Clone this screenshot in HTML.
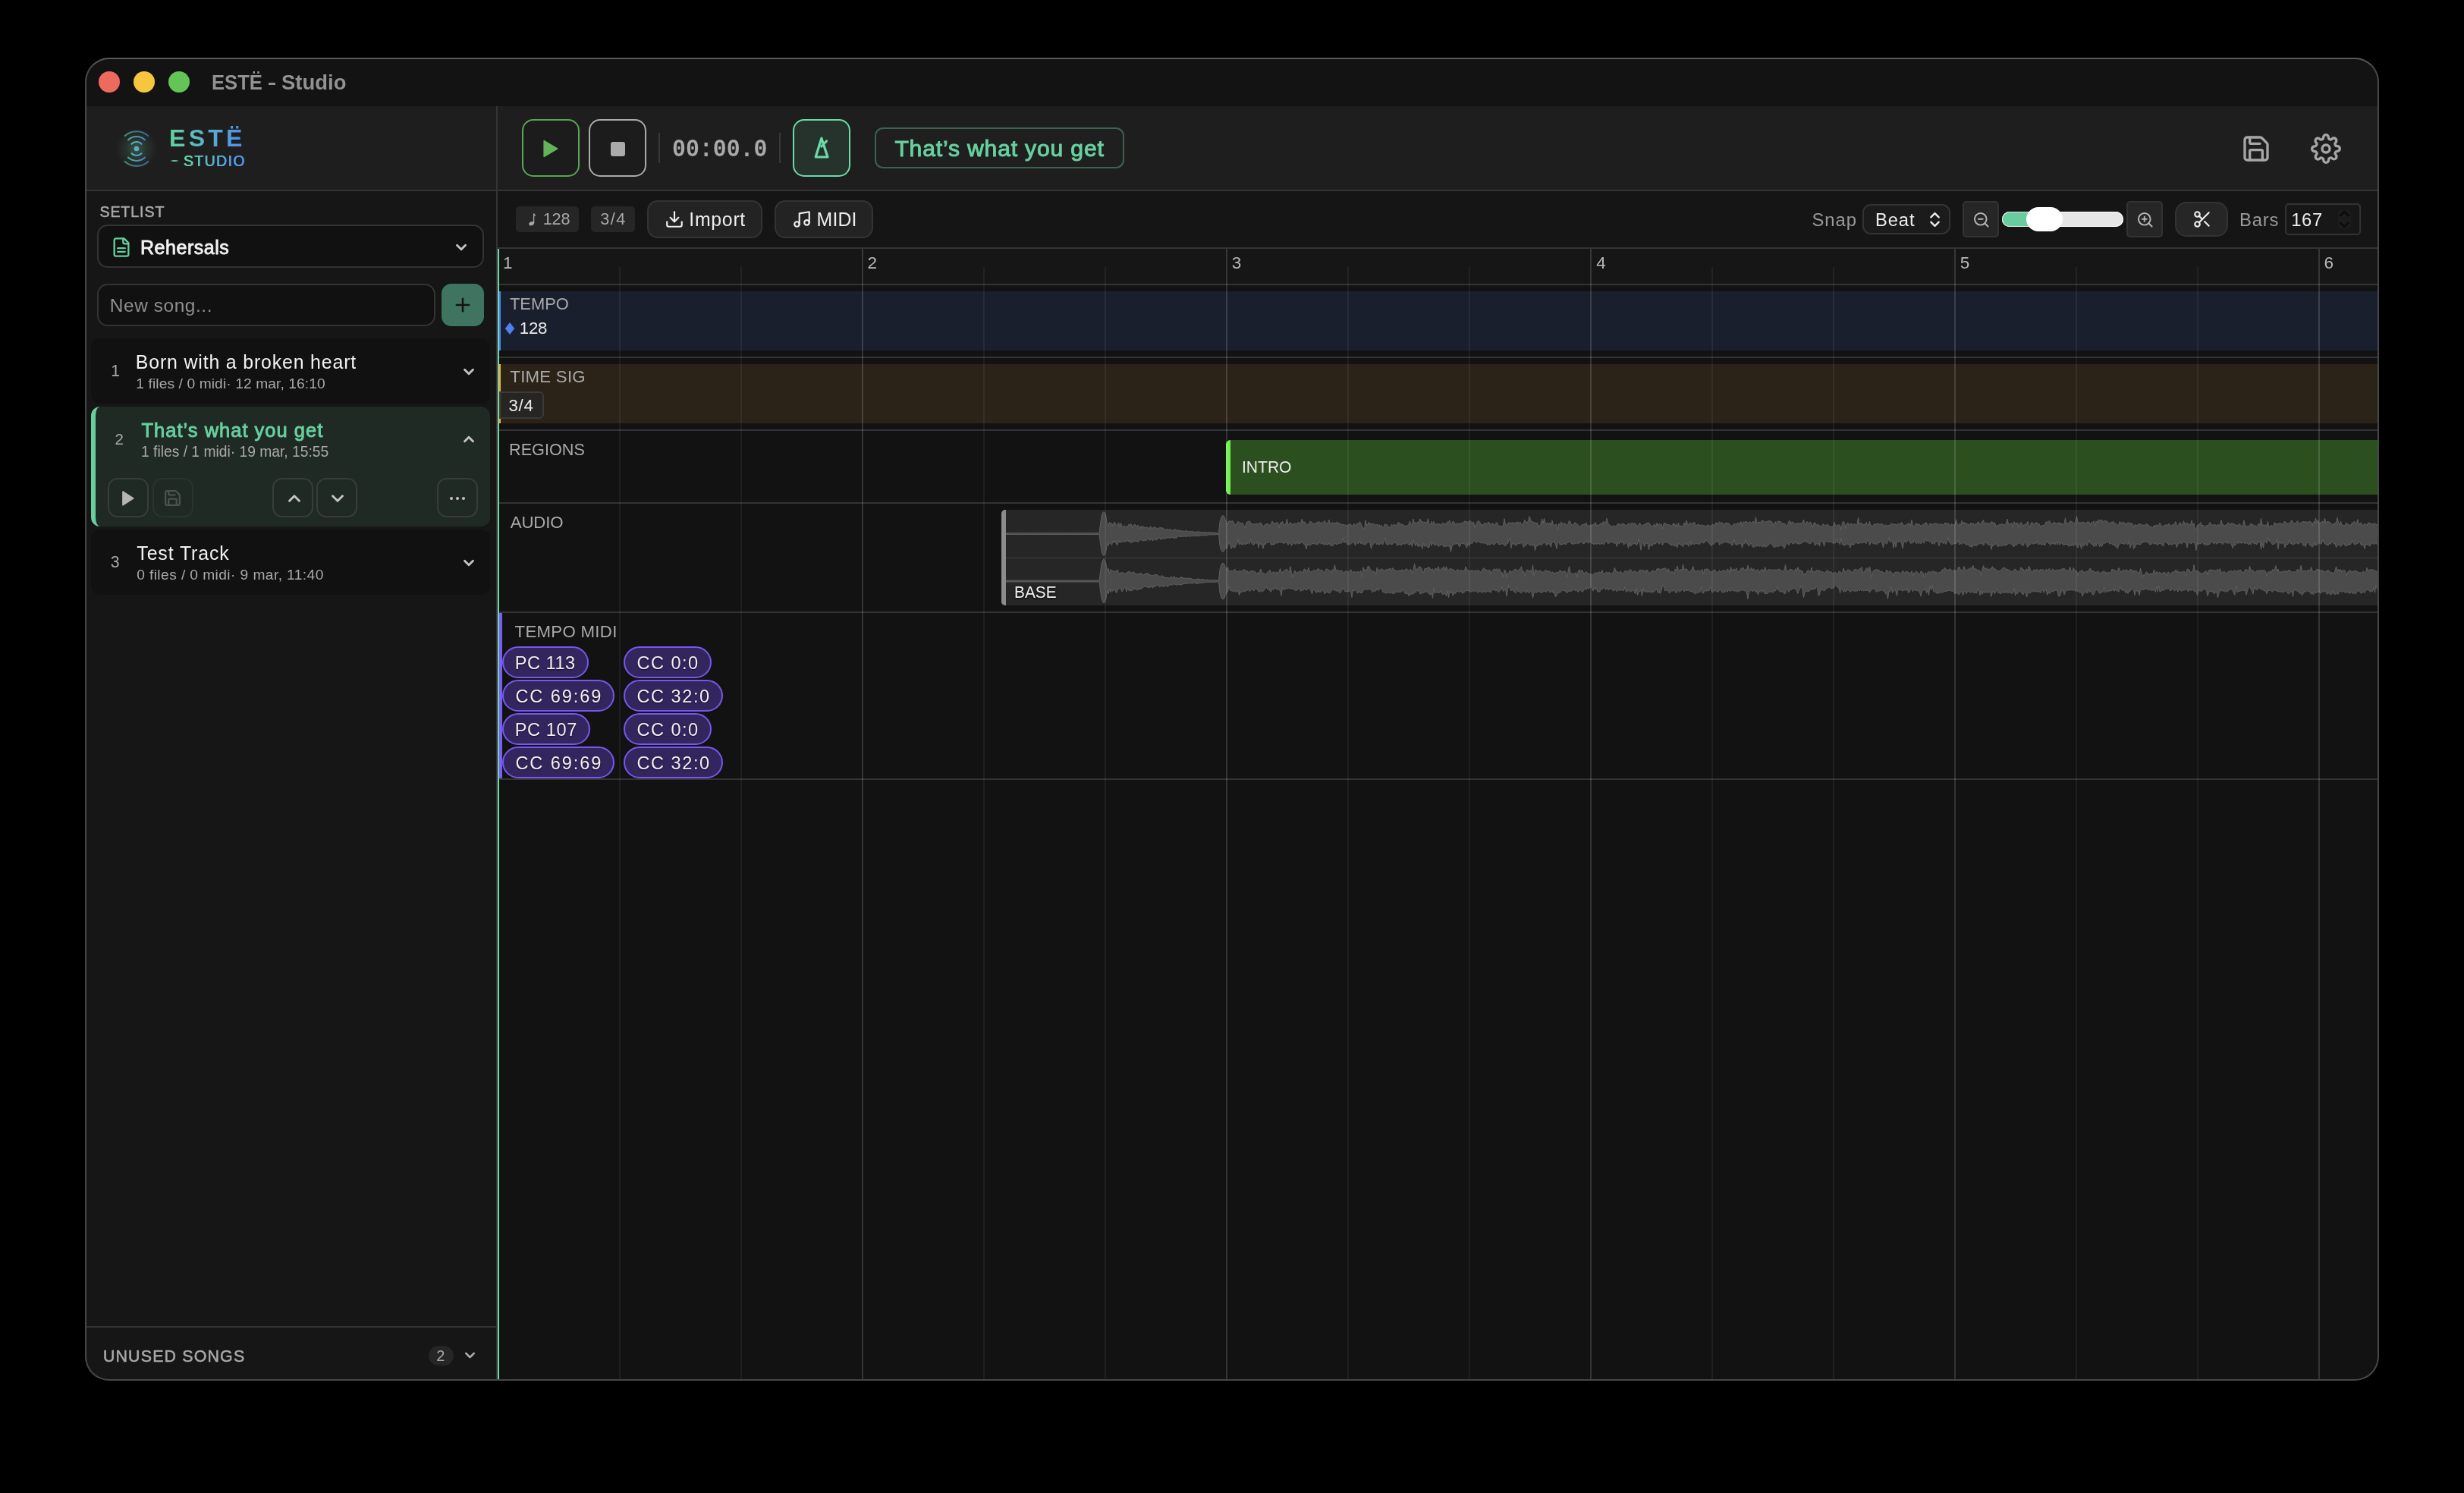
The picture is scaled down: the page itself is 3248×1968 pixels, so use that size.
<!DOCTYPE html>
<html><head><meta charset="utf-8"><title>ESTË - Studio</title>
<style>
html,body{margin:0;padding:0;background:#000;}
body{width:3248px;height:1968px;position:relative;overflow:hidden;font-family:"Liberation Sans",sans-serif;}
.win{position:absolute;left:112px;top:76px;width:3024px;height:1744px;border-radius:32px;overflow:hidden;background:#121212;}
.pg{position:absolute;left:-112px;top:-76px;width:3248px;height:1968px;will-change:transform;}
.b{position:absolute;box-sizing:border-box;display:block;}
.t{position:absolute;white-space:pre;line-height:1;display:block;}
.frame{position:absolute;left:112px;top:76px;width:3024px;height:1744px;border-radius:32px;box-sizing:border-box;border:2px solid #474747;border-top-color:#575757;pointer-events:none;}
</style></head><body>
<div class="win"><div class="pg">
<div class="b" style="left:112px;top:76px;width:3024px;height:64px;background:#131313;"></div>
<div class="b" style="left:112px;top:140px;width:3024px;height:110px;background:#1e1e1e;"></div>
<div class="b" style="left:112px;top:250px;width:3024px;height:2px;background:#343434;"></div>
<div class="b" style="left:112px;top:252px;width:542px;height:1568px;background:#161616;"></div>
<div class="b" style="left:654px;top:140px;width:2px;height:1680px;background:#343434;"></div>
<div class="b" style="left:656px;top:252px;width:2480px;height:74px;background:#151515;"></div>
<div class="b" style="left:656px;top:326px;width:2480px;height:2px;background:#343434;"></div>
<div class="b" style="left:656px;top:328px;width:2480px;height:46px;background:#161616;"></div>
<div class="b" style="left:656px;top:374px;width:2480px;height:2px;background:#343434;"></div>
<div class="b" style="left:130px;top:94px;width:28px;height:28px;border-radius:50%;background:#ee6a5f;"></div>
<div class="b" style="left:176px;top:94px;width:28px;height:28px;border-radius:50%;background:#f5c63e;"></div>
<div class="b" style="left:222px;top:94px;width:28px;height:28px;border-radius:50%;background:#62c555;"></div>
<span class="t" style="left:279.13px;top:95.00px;font-size:27.91px;font-weight:700;color:#929292;font-family:'Liberation Sans', sans-serif;transform-origin:0 0;transform:scaleX(0.9180);">ESTË</span>
<div class="b" style="left:354px;top:108.6px;width:9.4px;height:3.5px;background:#929292;"></div>
<span class="t" style="left:371.01px;top:95.00px;font-size:27.91px;font-weight:700;color:#929292;font-family:'Liberation Sans', sans-serif;transform-origin:0 0;transform:scaleX(0.9845);">Studio</span>
<svg class="b" style="left:140px;top:156px" width="80" height="80" viewBox="-40 -40 80 80" fill="none">
<defs><radialGradient id="glow"><stop offset="0" stop-color="#7fd9a8" stop-opacity=".30"/><stop offset=".5" stop-color="#6fcf9f" stop-opacity=".12"/><stop offset="1" stop-color="#6fcf9f" stop-opacity="0"/></radialGradient>
<linearGradient id="lg" x1="-16" y1="0" x2="16" y2="0" gradientUnits="userSpaceOnUse"><stop offset="0" stop-color="#5fd3a4"/><stop offset="1" stop-color="#4f8df2"/></linearGradient></defs>
<circle r="27" fill="url(#glow)"/>
<g stroke="url(#lg)" stroke-width="2" stroke-linecap="round">
<path d="M-6.5 -6.2 A9 9 0 0 1 6.5 -6.2" opacity=".95"/><path d="M-6.5 6.2 A9 9 0 0 0 6.5 6.2" opacity=".95"/>
<path d="M-11 -11.6 A16 16 0 0 1 11 -11.6" opacity=".8"/><path d="M-11 11.6 A16 16 0 0 0 11 11.6" opacity=".8"/>
<path d="M-15.3 -16.9 A22.8 22.8 0 0 1 15.3 -16.9" opacity=".6"/><path d="M-15.3 16.9 A22.8 22.8 0 0 0 15.3 16.9" opacity=".6"/>
</g><circle r="3.2" fill="url(#lg)"/></svg>
<span class="t" style="left:223.11px;top:166.00px;font-size:32.12px;letter-spacing:4.158px;font-weight:700;color:#5fbfc0;font-family:'Liberation Sans', sans-serif;background:linear-gradient(90deg,#62d3a2,#4f8df2);-webkit-background-clip:text;background-clip:text;-webkit-text-fill-color:transparent;">ESTË</span>
<span class="t" style="left:241.52px;top:203.00px;font-size:19.48px;letter-spacing:1.406px;font-weight:400;color:#5fbfc0;font-family:'Liberation Sans', sans-serif;background:linear-gradient(90deg,#62d3a2,#4f8df2);-webkit-background-clip:text;background-clip:text;-webkit-text-fill-color:transparent;">STUDIO</span>
<span class="t" style="left:241.97px;top:203.00px;font-size:19.48px;letter-spacing:1.406px;font-weight:400;color:#5fbfc0;font-family:'Liberation Sans', sans-serif;background:linear-gradient(90deg,#62d3a2,#4f8df2);-webkit-background-clip:text;background-clip:text;-webkit-text-fill-color:transparent;">STUDIO</span>
<span class="t" style="left:242.42px;top:203.00px;font-size:19.48px;letter-spacing:1.406px;font-weight:400;color:#5fbfc0;font-family:'Liberation Sans', sans-serif;background:linear-gradient(90deg,#62d3a2,#4f8df2);-webkit-background-clip:text;background-clip:text;-webkit-text-fill-color:transparent;">STUDIO</span>
<div class="b" style="left:224.5px;top:211px;width:10px;height:2px;background:linear-gradient(90deg,rgba(98,211,162,.3),#62d3a2,rgba(98,211,162,.4));border-radius:1px;"></div>
<div class="b" style="left:688px;top:157px;width:76px;height:76px;border:2px solid #5aa653;border-radius:15px;background:#1c1c1c;"></div>
<svg class="b" style="left:716px;top:184px" width="20" height="24" viewBox="0 0 20 24"><path d="M1.2 1.6 L18.6 12 L1.2 22.4 Z" fill="#64b25a" stroke="#64b25a" stroke-width="1.6" stroke-linejoin="round"/></svg>
<div class="b" style="left:776px;top:157px;width:76px;height:76px;border:2px solid #ababab;border-radius:15px;background:#1c1c1c;"></div>
<div class="b" style="left:804.5px;top:186.5px;width:19px;height:19px;background:#ababab;border-radius:3px;"></div>
<div class="b" style="left:868px;top:175px;width:2px;height:40px;background:#383838;"></div>
<span class="t" style="left:885.66px;top:182.00px;font-size:32.63px;font-weight:700;color:#a9a9a9;font-family:'Liberation Mono', monospace;transform-origin:0 0;transform:scaleX(0.9150);">00:00.0</span>
<div class="b" style="left:1027px;top:175px;width:2px;height:40px;background:#383838;"></div>
<div class="b" style="left:1045px;top:157px;width:76px;height:76px;border:2px solid #6bdba8;border-radius:15px;background:#26332d;"></div>
<svg class="b" style="left:1066px;top:176px" width="34" height="40" viewBox="0 0 34 40" fill="none" stroke="#6bdba8" stroke-width="3.2" stroke-linejoin="round" stroke-linecap="round"><path d="M16.9 6.2 L9.2 31 L25 31 Z"/><path d="M16.8 17 L23.5 10"/></svg>
<div class="b" style="left:1153px;top:168px;width:329px;height:54px;border:2px solid #3a6350;border-radius:11px;background:#1e1f1e;"></div>
<span class="t" style="left:1179.40px;top:181.00px;font-size:30.09px;letter-spacing:0.842px;font-weight:400;color:#68d09f;font-family:'Liberation Sans', sans-serif;-webkit-text-stroke:1px #68d09f;">That’s what you get</span>
<svg class="b" style="left:2954px;top:176px;" width="40" height="40" viewBox="0 0 24 24" fill="none" stroke="#a6a6a6" stroke-width="2" stroke-linecap="round" stroke-linejoin="round"><path d="M15.2 3a2 2 0 0 1 1.4.6l3.8 3.8a2 2 0 0 1 .6 1.4V19a2 2 0 0 1-2 2H5a2 2 0 0 1-2-2V5a2 2 0 0 1 2-2z"/><path d="M17 21v-7a1 1 0 0 0-1-1H8a1 1 0 0 0-1 1v7"/><path d="M7 3v4a1 1 0 0 0 1 1h7"/></svg>
<svg class="b" style="left:3045.8px;top:176px;" width="40" height="40" viewBox="0 0 24 24" fill="none" stroke="#a6a6a6" stroke-width="2" stroke-linecap="round" stroke-linejoin="round"><circle cx="12" cy="12" r="3"/><path d="M19.4 15a1.65 1.65 0 0 0 .33 1.82l.06.06a2 2 0 0 1 0 2.83 2 2 0 0 1-2.83 0l-.06-.06a1.65 1.65 0 0 0-1.82-.33 1.65 1.65 0 0 0-1 1.51V21a2 2 0 0 1-2 2 2 2 0 0 1-2-2v-.09A1.65 1.65 0 0 0 9 19.4a1.65 1.65 0 0 0-1.82.33l-.06.06a2 2 0 0 1-2.83 0 2 2 0 0 1 0-2.83l.06-.06a1.65 1.65 0 0 0 .33-1.82 1.65 1.65 0 0 0-1.51-1H3a2 2 0 0 1-2-2 2 2 0 0 1 2-2h.09A1.65 1.65 0 0 0 4.6 9a1.65 1.65 0 0 0-.33-1.82l-.06-.06a2 2 0 0 1 0-2.83 2 2 0 0 1 2.83 0l.06.06a1.65 1.65 0 0 0 1.82.33H9a1.65 1.65 0 0 0 1-1.51V3a2 2 0 0 1 2-2 2 2 0 0 1 2 2v.09a1.65 1.65 0 0 0 1 1.51 1.65 1.65 0 0 0 1.82-.33l.06-.06a2 2 0 0 1 2.83 0 2 2 0 0 1 0 2.83l-.06.06a1.65 1.65 0 0 0-.33 1.82V9a1.65 1.65 0 0 0 1.51 1H21a2 2 0 0 1 2 2 2 2 0 0 1-2 2h-.09a1.65 1.65 0 0 0-1.51 1z"/></svg>
<div class="b" style="left:680px;top:272px;width:83px;height:34px;background:#262626;border-radius:5px;"></div>
<svg class="b" style="left:695px;top:279px" width="12" height="20" viewBox="0 0 12 20"><ellipse cx="5.6" cy="15.7" rx="3.4" ry="2.4" transform="rotate(-22 5.6 15.7)" fill="#a8a8a8"/><path d="M8.6 15.2 V2.6 C9.2 4.2 9.9 4.8 10.6 5.4" stroke="#a8a8a8" stroke-width="1.3" fill="none"/></svg>
<span class="t" style="left:715.68px;top:278.00px;font-size:21.66px;letter-spacing:-0.184px;font-weight:400;color:#a8a8a8;font-family:'Liberation Sans', sans-serif;">128</span>
<div class="b" style="left:779px;top:272px;width:58px;height:34px;background:#262626;border-radius:5px;"></div>
<span class="t" style="left:791.14px;top:278.00px;font-size:21.66px;letter-spacing:1.498px;font-weight:400;color:#a8a8a8;font-family:'Liberation Sans', sans-serif;">3/4</span>
<div class="b" style="left:853px;top:264px;width:152px;height:50px;border:2px solid #333;border-radius:14px;background:#232323;"></div>
<svg class="b" style="left:876px;top:276px;" width="26" height="26" viewBox="0 0 24 24" fill="none" stroke="#eee" stroke-width="2" stroke-linecap="round" stroke-linejoin="round"><path d="M21 15v4a2 2 0 0 1-2 2H5a2 2 0 0 1-2-2v-4"/><polyline points="7 10 12 15 17 10"/><line x1="12" x2="12" y1="15" y2="3"/></svg>
<span class="t" style="left:908.36px;top:278.00px;font-size:24.85px;letter-spacing:0.700px;font-weight:400;color:#ededed;font-family:'Liberation Sans', sans-serif;">Import</span>
<div class="b" style="left:1021px;top:264px;width:130px;height:50px;border:2px solid #333;border-radius:14px;background:#232323;"></div>
<svg class="b" style="left:1044.2px;top:276px;" width="26" height="26" viewBox="0 0 24 24" fill="none" stroke="#eee" stroke-width="2" stroke-linecap="round" stroke-linejoin="round"><path d="M9 18V5l12-2v13"/><circle cx="6" cy="18" r="3"/><circle cx="18" cy="16" r="3"/></svg>
<span class="t" style="left:1076.61px;top:278.00px;font-size:24.85px;letter-spacing:0.119px;font-weight:400;color:#ededed;font-family:'Liberation Sans', sans-serif;">MIDI</span>
<span class="t" style="left:2388.53px;top:278.00px;font-size:23.84px;letter-spacing:0.922px;font-weight:400;color:#9a9a9a;font-family:'Liberation Sans', sans-serif;">Snap</span>
<div class="b" style="left:2455px;top:269px;width:116px;height:40px;border:2px solid #333;border-radius:11px;background:#1b1b1b;"></div>
<span class="t" style="left:2471.90px;top:279.00px;font-size:23.69px;letter-spacing:0.970px;font-weight:400;color:#ededed;font-family:'Liberation Sans', sans-serif;">Beat</span>
<svg class="b" style="left:2538px;top:277px;" width="25" height="25" viewBox="0 0 24 24" fill="none" stroke="#eee" stroke-width="2.2" stroke-linecap="round" stroke-linejoin="round"><path d="m7 15 5 5 5-5"/><path d="m7 9 5-5 5 5"/></svg>
<div class="b" style="left:2587px;top:265px;width:48px;height:48px;border:2px solid #333;border-radius:5px;background:#262626;"></div>
<svg class="b" style="left:2600px;top:278.3px;" width="23.5" height="23.5" viewBox="0 0 24 24" fill="none" stroke="#b5b5b5" stroke-width="2" stroke-linecap="round" stroke-linejoin="round"><circle cx="11" cy="11" r="8"/><line x1="21" x2="16.65" y1="21" y2="16.65"/><line x1="8" x2="14" y1="11" y2="11"/></svg>
<div class="b" style="left:2639px;top:279px;width:160px;height:20px;background:#e6e6e6;border-radius:10px;box-shadow:inset 0 0 0 1px #fff;"></div>
<div class="b" style="left:2639px;top:279px;width:60px;height:20px;background:#6acb9f;border-radius:10px 0 0 10px;box-shadow:inset 0 0 0 1px #d8efe5;"></div>
<div class="b" style="left:2671px;top:273px;width:48px;height:32px;background:#fff;border-radius:16px;"></div>
<div class="b" style="left:2803px;top:265px;width:48px;height:48px;border:2px solid #333;border-radius:5px;background:#262626;"></div>
<svg class="b" style="left:2816.3px;top:278.3px;" width="23.5" height="23.5" viewBox="0 0 24 24" fill="none" stroke="#b5b5b5" stroke-width="2" stroke-linecap="round" stroke-linejoin="round"><circle cx="11" cy="11" r="8"/><line x1="21" x2="16.65" y1="21" y2="16.65"/><line x1="8" x2="14" y1="11" y2="11"/><line x1="11" x2="11" y1="8" y2="14"/></svg>
<div class="b" style="left:2867px;top:266px;width:70px;height:46px;border:2px solid #333;border-radius:15px;background:#262626;"></div>
<svg class="b" style="left:2890px;top:275.9px;" width="26" height="26" viewBox="0 0 24 24" fill="none" stroke="#eee" stroke-width="2" stroke-linecap="round" stroke-linejoin="round"><circle cx="6" cy="6" r="3"/><path d="M8.12 8.12 12 12"/><path d="M20 4 8.12 15.88"/><circle cx="6" cy="18" r="3"/><path d="M14.8 14.8 20 20"/></svg>
<span class="t" style="left:2952.09px;top:278.00px;font-size:23.84px;letter-spacing:0.752px;font-weight:400;color:#9a9a9a;font-family:'Liberation Sans', sans-serif;">Bars</span>
<div class="b" style="left:3012px;top:268px;width:100px;height:42px;border:2px solid #333;border-radius:5px;background:#171717;"></div>
<span class="t" style="left:3020.21px;top:278.00px;font-size:23.84px;letter-spacing:0.586px;font-weight:400;color:#ededed;font-family:'Liberation Sans', sans-serif;">167</span>
<svg class="b" style="left:3080px;top:274px" width="22" height="30" viewBox="0 0 22 30" fill="none" stroke="#0b0b0b" stroke-width="2.6" stroke-linecap="round" stroke-linejoin="round"><rect x="2" y="3" width="17" height="24" rx="4" fill="#1c1c1c" stroke="none"/><path d="M5 10.2 L10.3 5 L15.6 10.2"/><path d="M5 19.6 L10.3 24.8 L15.6 19.6"/></svg>
<div class="b" style="left:658px;top:384px;width:2480px;height:78px;background:#1a1f2e;"></div>
<div class="b" style="left:658px;top:384px;width:2px;height:78px;background:#4f80ff;"></div>
<div class="b" style="left:658px;top:470px;width:2480px;height:2px;background:#333;"></div>
<span class="t" style="left:672.36px;top:390.00px;font-size:22.24px;font-weight:400;color:#a9a9a9;font-family:'Liberation Sans', sans-serif;transform-origin:0 0;transform:scaleX(0.9844);">TEMPO</span>
<svg class="b" style="left:665px;top:424px" width="14" height="18" viewBox="0 0 14 18"><path d="M7 0.9 L13.2 9 L7 17.1 L0.8 9 Z" fill="#4f80f0"/></svg>
<span class="t" style="left:684.73px;top:422.00px;font-size:22.24px;letter-spacing:-0.185px;font-weight:400;color:#ececec;font-family:'Liberation Sans', sans-serif;">128</span>
<div class="b" style="left:658px;top:480px;width:2480px;height:78px;background:#2b2318;"></div>
<div class="b" style="left:658px;top:480px;width:2px;height:78px;background:#ffa531;"></div>
<div class="b" style="left:658px;top:566px;width:2480px;height:2px;background:#333;"></div>
<span class="t" style="left:672.36px;top:486.00px;font-size:22.24px;letter-spacing:0.241px;font-weight:400;color:#a9a9a9;font-family:'Liberation Sans', sans-serif;">TIME SIG</span>
<div class="b" style="left:658px;top:516px;width:59px;height:36px;border:2px solid #3a3a3a;border-left:none;border-radius:0 6px 6px 0;background:rgba(38,38,38,.82);"></div>
<span class="t" style="left:670.52px;top:524.00px;font-size:22.24px;letter-spacing:0.661px;font-weight:400;color:#ececec;font-family:'Liberation Sans', sans-serif;">3/4</span>
<div class="b" style="left:658px;top:662px;width:2480px;height:2px;background:#333;"></div>
<span class="t" style="left:671.07px;top:582.00px;font-size:22.24px;font-weight:400;color:#a9a9a9;font-family:'Liberation Sans', sans-serif;transform-origin:0 0;transform:scaleX(0.9735);">REGIONS</span>
<div class="b" style="left:1616px;top:580px;width:1530px;height:72px;background:#2c4f20;border-radius:6px 0 0 6px;"></div>
<div class="b" style="left:1616px;top:580px;width:6px;height:72px;background:#72f04f;border-radius:6px 0 0 6px;"></div>
<span class="t" style="left:1636.51px;top:605.00px;font-size:22.24px;font-weight:400;color:#ececec;font-family:'Liberation Sans', sans-serif;transform-origin:0 0;transform:scaleX(0.9462);">INTRO</span>
<div class="b" style="left:658px;top:806px;width:2480px;height:2px;background:#333;"></div>
<span class="t" style="left:672.80px;top:678.00px;font-size:22.24px;letter-spacing:-0.171px;font-weight:400;color:#a9a9a9;font-family:'Liberation Sans', sans-serif;">AUDIO</span>
<div class="b" style="left:1320px;top:672px;width:1820px;height:126px;background:#262626;border-radius:5px 0 0 5px;"></div>
<div class="b" style="left:1326px;top:733.5px;width:1820px;height:3px;background:#2e2e2e;"></div>
<svg class="b" style="left:0;top:0" width="3248" height="900" viewBox="0 0 3248 900"><g fill="#4b4b4b" stroke="#626262" stroke-width="0.9" stroke-linejoin="round"><path d="M1326.0 702.5 L1327.5 702.5 L1329.0 702.5 L1330.5 702.5 L1332.0 702.5 L1333.5 702.5 L1335.0 702.5 L1336.5 702.5 L1338.0 702.5 L1339.5 702.5 L1341.0 702.5 L1342.5 702.5 L1344.0 702.5 L1345.5 702.5 L1347.0 702.5 L1348.5 702.5 L1350.0 702.5 L1351.5 702.5 L1353.0 702.5 L1354.5 702.5 L1356.0 702.5 L1357.5 702.5 L1359.0 702.5 L1360.5 702.5 L1362.0 702.5 L1363.5 702.5 L1365.0 702.5 L1366.5 702.5 L1368.0 702.5 L1369.5 702.5 L1371.0 702.5 L1372.5 702.5 L1374.0 702.5 L1375.5 702.5 L1377.0 702.5 L1378.5 702.5 L1380.0 702.5 L1381.5 702.5 L1383.0 702.5 L1384.5 702.5 L1386.0 702.5 L1387.5 702.5 L1389.0 702.5 L1390.5 702.5 L1392.0 702.5 L1393.5 702.5 L1395.0 702.5 L1396.5 702.5 L1398.0 702.5 L1399.5 702.5 L1401.0 702.5 L1402.5 702.5 L1404.0 702.5 L1405.5 702.5 L1407.0 702.5 L1408.5 702.5 L1410.0 702.5 L1411.5 702.5 L1413.0 702.5 L1414.5 702.5 L1416.0 702.5 L1417.5 702.5 L1419.0 702.5 L1420.5 702.5 L1422.0 702.5 L1423.5 702.5 L1425.0 702.5 L1426.5 702.5 L1428.0 702.5 L1429.5 702.5 L1431.0 702.5 L1432.5 702.5 L1434.0 702.5 L1435.5 702.5 L1437.0 702.5 L1438.5 702.5 L1440.0 702.5 L1441.5 702.5 L1443.0 702.5 L1444.5 702.5 L1446.0 702.5 L1447.5 702.5 L1449.0 702.5 L1450.5 690.8 L1452.0 680.8 L1453.5 676.0 L1455.0 674.5 L1456.5 676.0 L1458.0 680.8 L1459.5 690.8 L1461.0 692.8 L1462.5 688.3 L1464.0 690.5 L1465.5 689.5 L1467.0 693.6 L1468.5 688.5 L1470.0 689.2 L1471.5 691.6 L1473.0 693.2 L1474.5 688.8 L1476.0 694.8 L1477.5 689.0 L1479.0 693.8 L1480.5 695.1 L1482.0 692.7 L1483.5 694.1 L1485.0 694.3 L1486.5 694.0 L1488.0 690.9 L1489.5 692.2 L1491.0 690.4 L1492.5 695.5 L1494.0 692.3 L1495.5 691.2 L1497.0 692.0 L1498.5 695.0 L1500.0 692.1 L1501.5 694.2 L1503.0 696.8 L1504.5 693.0 L1506.0 696.3 L1507.5 693.8 L1509.0 695.6 L1510.5 695.1 L1512.0 695.2 L1513.5 695.4 L1515.0 697.6 L1516.5 693.6 L1518.0 696.3 L1519.5 696.0 L1521.0 695.0 L1522.5 694.8 L1524.0 696.3 L1525.5 696.2 L1527.0 697.5 L1528.5 695.1 L1530.0 695.9 L1531.5 695.7 L1533.0 696.1 L1534.5 697.1 L1536.0 699.0 L1537.5 697.4 L1539.0 697.7 L1540.5 698.3 L1542.0 697.9 L1543.5 697.8 L1545.0 699.6 L1546.5 699.3 L1548.0 697.5 L1549.5 697.8 L1551.0 699.4 L1552.5 698.4 L1554.0 700.2 L1555.5 698.5 L1557.0 700.2 L1558.5 699.7 L1560.0 700.3 L1561.5 700.3 L1563.0 699.3 L1564.5 700.2 L1566.0 700.9 L1567.5 700.2 L1569.0 700.9 L1570.5 700.3 L1572.0 700.2 L1573.5 701.3 L1575.0 701.2 L1576.5 701.3 L1578.0 700.6 L1579.5 701.4 L1581.0 700.7 L1582.5 701.5 L1584.0 701.4 L1585.5 701.6 L1587.0 702.0 L1588.5 701.1 L1590.0 701.9 L1591.5 701.9 L1593.0 701.6 L1594.5 702.1 L1596.0 701.7 L1597.5 701.8 L1599.0 702.1 L1600.5 702.0 L1602.0 702.2 L1603.5 702.5 L1605.0 702.6 L1606.5 702.5 L1608.0 687.9 L1609.5 682.5 L1611.0 680.0 L1612.5 679.6 L1614.0 681.4 L1615.5 685.7 L1617.0 690.3 L1618.5 689.6 L1620.0 686.7 L1621.5 686.5 L1623.0 688.0 L1624.5 686.0 L1626.0 688.3 L1627.5 691.7 L1629.0 691.6 L1630.5 689.5 L1632.0 687.2 L1633.5 688.9 L1635.0 690.0 L1636.5 689.1 L1638.0 689.3 L1639.5 692.6 L1641.0 695.8 L1642.5 689.5 L1644.0 687.8 L1645.5 687.5 L1647.0 686.7 L1648.5 688.4 L1650.0 690.7 L1651.5 690.7 L1653.0 691.1 L1654.5 690.9 L1656.0 689.7 L1657.5 691.0 L1659.0 689.8 L1660.5 689.2 L1662.0 689.2 L1663.5 690.6 L1665.0 694.5 L1666.5 692.8 L1668.0 690.9 L1669.5 690.7 L1671.0 689.7 L1672.5 692.1 L1674.0 692.0 L1675.5 690.8 L1677.0 686.8 L1678.5 689.4 L1680.0 689.8 L1681.5 689.7 L1683.0 688.7 L1684.5 688.9 L1686.0 695.4 L1687.5 689.2 L1689.0 688.8 L1690.5 687.3 L1692.0 691.4 L1693.5 692.0 L1695.0 690.2 L1696.5 684.1 L1698.0 692.3 L1699.5 690.4 L1701.0 688.5 L1702.5 690.2 L1704.0 692.3 L1705.5 690.3 L1707.0 689.7 L1708.5 691.1 L1710.0 689.9 L1711.5 688.0 L1713.0 689.8 L1714.5 690.7 L1716.0 684.3 L1717.5 687.7 L1719.0 688.1 L1720.5 688.3 L1722.0 691.4 L1723.5 691.1 L1725.0 692.5 L1726.5 687.7 L1728.0 687.6 L1729.5 688.7 L1731.0 690.2 L1732.5 690.3 L1734.0 689.7 L1735.5 688.6 L1737.0 688.8 L1738.5 687.1 L1740.0 689.5 L1741.5 688.3 L1743.0 689.7 L1744.5 688.1 L1746.0 686.3 L1747.5 688.9 L1749.0 690.1 L1750.5 688.7 L1752.0 685.3 L1753.5 691.0 L1755.0 689.6 L1756.5 688.8 L1758.0 689.7 L1759.5 688.9 L1761.0 689.7 L1762.5 687.8 L1764.0 690.2 L1765.5 689.1 L1767.0 691.1 L1768.5 691.3 L1770.0 691.8 L1771.5 690.9 L1773.0 692.6 L1774.5 691.7 L1776.0 693.8 L1777.5 691.5 L1779.0 691.0 L1780.5 690.9 L1782.0 693.9 L1783.5 692.6 L1785.0 690.2 L1786.5 693.7 L1788.0 691.2 L1789.5 689.3 L1791.0 691.0 L1792.5 687.4 L1794.0 690.9 L1795.5 693.6 L1797.0 696.1 L1798.5 698.2 L1800.0 685.5 L1801.5 692.3 L1803.0 691.2 L1804.5 688.1 L1806.0 691.6 L1807.5 689.5 L1809.0 691.7 L1810.5 690.4 L1812.0 690.6 L1813.5 692.8 L1815.0 691.0 L1816.5 693.4 L1818.0 691.3 L1819.5 694.1 L1821.0 692.1 L1822.5 696.0 L1824.0 694.2 L1825.5 690.6 L1827.0 692.1 L1828.5 691.4 L1830.0 694.9 L1831.5 695.0 L1833.0 693.8 L1834.5 691.2 L1836.0 692.7 L1837.5 691.1 L1839.0 691.8 L1840.5 693.0 L1842.0 690.8 L1843.5 688.1 L1845.0 690.9 L1846.5 690.4 L1848.0 692.1 L1849.5 690.9 L1851.0 693.7 L1852.5 693.1 L1854.0 693.2 L1855.5 692.4 L1857.0 691.1 L1858.5 686.9 L1860.0 691.5 L1861.5 692.2 L1863.0 683.9 L1864.5 690.6 L1866.0 688.3 L1867.5 689.9 L1869.0 688.0 L1870.5 687.8 L1872.0 684.0 L1873.5 687.6 L1875.0 687.0 L1876.5 688.9 L1878.0 688.0 L1879.5 688.5 L1881.0 688.8 L1882.5 683.6 L1884.0 691.1 L1885.5 691.6 L1887.0 687.4 L1888.5 690.7 L1890.0 687.3 L1891.5 691.7 L1893.0 691.4 L1894.5 689.8 L1896.0 691.2 L1897.5 690.6 L1899.0 693.4 L1900.5 690.0 L1902.0 689.5 L1903.5 690.6 L1905.0 689.8 L1906.5 691.1 L1908.0 687.7 L1909.5 687.8 L1911.0 685.8 L1912.5 689.9 L1914.0 690.6 L1915.5 686.8 L1917.0 688.6 L1918.5 691.5 L1920.0 689.4 L1921.5 690.8 L1923.0 689.4 L1924.5 691.1 L1926.0 689.0 L1927.5 689.8 L1929.0 688.8 L1930.5 686.8 L1932.0 687.8 L1933.5 687.6 L1935.0 688.5 L1936.5 687.1 L1938.0 686.6 L1939.5 688.0 L1941.0 689.4 L1942.5 688.0 L1944.0 695.8 L1945.5 691.4 L1947.0 688.5 L1948.5 686.3 L1950.0 687.3 L1951.5 689.5 L1953.0 693.8 L1954.5 691.0 L1956.0 691.6 L1957.5 688.8 L1959.0 690.9 L1960.5 689.4 L1962.0 688.3 L1963.5 689.2 L1965.0 691.9 L1966.5 690.7 L1968.0 689.6 L1969.5 692.7 L1971.0 691.5 L1972.5 688.6 L1974.0 690.1 L1975.5 693.6 L1977.0 693.7 L1978.5 692.9 L1980.0 694.4 L1981.5 692.2 L1983.0 683.6 L1984.5 690.9 L1986.0 692.5 L1987.5 689.9 L1989.0 688.7 L1990.5 688.7 L1992.0 690.0 L1993.5 688.3 L1995.0 691.0 L1996.5 688.8 L1998.0 689.2 L1999.5 688.6 L2001.0 687.8 L2002.5 689.4 L2004.0 688.1 L2005.5 691.7 L2007.0 692.1 L2008.5 688.4 L2010.0 685.2 L2011.5 688.4 L2013.0 689.0 L2014.5 686.7 L2016.0 680.5 L2017.5 684.7 L2019.0 687.7 L2020.5 687.6 L2022.0 688.9 L2023.5 688.7 L2025.0 690.1 L2026.5 688.9 L2028.0 695.3 L2029.5 692.5 L2031.0 691.1 L2032.5 683.9 L2034.0 690.2 L2035.5 683.3 L2037.0 689.5 L2038.5 690.5 L2040.0 688.6 L2041.5 690.8 L2043.0 689.1 L2044.5 692.2 L2046.0 686.0 L2047.5 691.1 L2049.0 692.4 L2050.5 691.4 L2052.0 690.9 L2053.5 698.5 L2055.0 689.9 L2056.5 692.9 L2058.0 687.7 L2059.5 691.4 L2061.0 689.4 L2062.5 689.7 L2064.0 690.7 L2065.5 693.0 L2067.0 690.4 L2068.5 686.0 L2070.0 688.6 L2071.5 692.0 L2073.0 692.4 L2074.5 690.7 L2076.0 688.5 L2077.5 691.2 L2079.0 690.1 L2080.5 692.4 L2082.0 694.1 L2083.5 693.2 L2085.0 691.6 L2086.5 691.7 L2088.0 690.6 L2089.5 691.6 L2091.0 688.9 L2092.5 693.5 L2094.0 692.3 L2095.5 694.1 L2097.0 691.5 L2098.5 693.8 L2100.0 690.9 L2101.5 692.0 L2103.0 688.5 L2104.5 693.0 L2106.0 691.8 L2107.5 692.8 L2109.0 690.5 L2110.5 689.4 L2112.0 691.9 L2113.5 686.9 L2115.0 689.8 L2116.5 689.1 L2118.0 683.1 L2119.5 689.3 L2121.0 691.1 L2122.5 692.6 L2124.0 693.4 L2125.5 694.7 L2127.0 692.3 L2128.5 694.2 L2130.0 693.4 L2131.5 691.6 L2133.0 690.1 L2134.5 691.1 L2136.0 690.7 L2137.5 692.2 L2139.0 689.5 L2140.5 691.1 L2142.0 691.7 L2143.5 692.9 L2145.0 692.3 L2146.5 689.9 L2148.0 690.2 L2149.5 691.5 L2151.0 689.0 L2152.5 690.4 L2154.0 689.6 L2155.5 689.9 L2157.0 691.5 L2158.5 694.5 L2160.0 691.1 L2161.5 689.6 L2163.0 691.8 L2164.5 693.1 L2166.0 692.0 L2167.5 691.4 L2169.0 691.6 L2170.5 689.0 L2172.0 690.0 L2173.5 688.9 L2175.0 690.9 L2176.5 692.9 L2178.0 694.1 L2179.5 692.6 L2181.0 690.5 L2182.5 695.0 L2184.0 689.3 L2185.5 692.2 L2187.0 690.2 L2188.5 691.6 L2190.0 690.8 L2191.5 696.8 L2193.0 690.5 L2194.5 688.8 L2196.0 691.6 L2197.5 691.0 L2199.0 691.8 L2200.5 691.5 L2202.0 693.2 L2203.5 692.6 L2205.0 691.1 L2206.5 689.0 L2208.0 693.7 L2209.5 690.5 L2211.0 694.6 L2212.5 689.0 L2214.0 695.0 L2215.5 692.7 L2217.0 694.1 L2218.5 693.0 L2220.0 689.2 L2221.5 691.8 L2223.0 686.1 L2224.5 690.6 L2226.0 692.2 L2227.5 688.5 L2229.0 690.7 L2230.5 689.7 L2232.0 689.4 L2233.5 688.2 L2235.0 692.1 L2236.5 693.1 L2238.0 691.1 L2239.5 691.5 L2241.0 692.7 L2242.5 692.2 L2244.0 692.0 L2245.5 692.6 L2247.0 693.2 L2248.5 693.5 L2250.0 692.7 L2251.5 692.1 L2253.0 692.9 L2254.5 693.2 L2256.0 692.7 L2257.5 690.9 L2259.0 691.5 L2260.5 693.0 L2262.0 688.5 L2263.5 690.8 L2265.0 689.1 L2266.5 687.8 L2268.0 689.6 L2269.5 688.9 L2271.0 689.2 L2272.5 693.9 L2274.0 689.7 L2275.5 689.0 L2277.0 689.8 L2278.5 689.5 L2280.0 691.4 L2281.5 692.7 L2283.0 693.6 L2284.5 692.0 L2286.0 690.3 L2287.5 690.6 L2289.0 691.7 L2290.5 688.9 L2292.0 690.1 L2293.5 689.5 L2295.0 687.4 L2296.5 693.6 L2298.0 687.9 L2299.5 688.5 L2301.0 687.2 L2302.5 687.7 L2304.0 689.7 L2305.5 688.5 L2307.0 687.6 L2308.5 689.7 L2310.0 688.1 L2311.5 687.3 L2313.0 689.7 L2314.5 681.6 L2316.0 689.5 L2317.5 688.0 L2319.0 688.5 L2320.5 688.2 L2322.0 686.9 L2323.5 685.3 L2325.0 687.5 L2326.5 688.4 L2328.0 687.4 L2329.5 687.8 L2331.0 686.2 L2332.5 686.6 L2334.0 687.3 L2335.5 687.3 L2337.0 692.7 L2338.5 689.8 L2340.0 687.6 L2341.5 690.2 L2343.0 687.1 L2344.5 687.2 L2346.0 687.3 L2347.5 687.8 L2349.0 689.7 L2350.5 690.1 L2352.0 689.7 L2353.5 691.2 L2355.0 693.8 L2356.5 691.4 L2358.0 687.1 L2359.5 686.6 L2361.0 690.4 L2362.5 687.6 L2364.0 689.2 L2365.5 690.0 L2367.0 690.3 L2368.5 689.7 L2370.0 689.9 L2371.5 689.7 L2373.0 690.1 L2374.5 689.7 L2376.0 687.7 L2377.5 685.2 L2379.0 690.0 L2380.5 691.8 L2382.0 687.3 L2383.5 689.4 L2385.0 689.4 L2386.5 688.1 L2388.0 690.4 L2389.5 695.1 L2391.0 689.4 L2392.5 688.5 L2394.0 692.4 L2395.5 691.2 L2397.0 691.8 L2398.5 692.7 L2400.0 693.9 L2401.5 693.4 L2403.0 690.5 L2404.5 691.5 L2406.0 692.9 L2407.5 692.1 L2409.0 691.0 L2410.5 693.1 L2412.0 693.5 L2413.5 694.4 L2415.0 694.1 L2416.5 694.7 L2418.0 688.2 L2419.5 692.7 L2421.0 693.3 L2422.5 691.7 L2424.0 691.8 L2425.5 692.4 L2427.0 698.5 L2428.5 689.8 L2430.0 687.0 L2431.5 689.6 L2433.0 696.6 L2434.5 690.0 L2436.0 688.9 L2437.5 692.8 L2439.0 690.5 L2440.5 689.8 L2442.0 691.9 L2443.5 691.4 L2445.0 690.2 L2446.5 692.7 L2448.0 691.3 L2449.5 681.9 L2451.0 691.3 L2452.5 689.5 L2454.0 689.5 L2455.5 691.3 L2457.0 691.2 L2458.5 692.1 L2460.0 688.3 L2461.5 692.0 L2463.0 692.2 L2464.5 687.3 L2466.0 692.5 L2467.5 693.0 L2469.0 693.9 L2470.5 690.4 L2472.0 691.3 L2473.5 690.9 L2475.0 690.1 L2476.5 690.3 L2478.0 691.5 L2479.5 690.5 L2481.0 690.3 L2482.5 692.2 L2484.0 694.3 L2485.5 691.5 L2487.0 693.7 L2488.5 692.2 L2490.0 692.9 L2491.5 692.2 L2493.0 689.9 L2494.5 690.7 L2496.0 690.7 L2497.5 690.9 L2499.0 691.5 L2500.5 692.1 L2502.0 690.2 L2503.5 691.7 L2505.0 689.8 L2506.5 688.4 L2508.0 690.3 L2509.5 693.0 L2511.0 692.7 L2512.5 691.7 L2514.0 691.0 L2515.5 689.9 L2517.0 690.0 L2518.5 693.0 L2520.0 685.1 L2521.5 693.9 L2523.0 693.5 L2524.5 692.1 L2526.0 689.6 L2527.5 691.5 L2529.0 690.4 L2530.5 691.5 L2532.0 693.4 L2533.5 692.3 L2535.0 691.6 L2536.5 690.1 L2538.0 689.9 L2539.5 688.7 L2541.0 693.7 L2542.5 693.2 L2544.0 689.8 L2545.5 690.7 L2547.0 691.3 L2548.5 690.5 L2550.0 690.3 L2551.5 689.6 L2553.0 690.0 L2554.5 691.7 L2556.0 690.4 L2557.5 691.8 L2559.0 690.8 L2560.5 691.2 L2562.0 692.6 L2563.5 689.3 L2565.0 689.5 L2566.5 690.2 L2568.0 690.0 L2569.5 690.7 L2571.0 694.4 L2572.5 690.6 L2574.0 691.9 L2575.5 691.8 L2577.0 692.3 L2578.5 684.8 L2580.0 691.0 L2581.5 693.7 L2583.0 690.0 L2584.5 692.2 L2586.0 686.3 L2587.5 690.6 L2589.0 688.3 L2590.5 689.6 L2592.0 690.0 L2593.5 690.5 L2595.0 691.1 L2596.5 692.7 L2598.0 689.0 L2599.5 690.5 L2601.0 689.6 L2602.5 693.2 L2604.0 690.3 L2605.5 691.0 L2607.0 688.1 L2608.5 688.3 L2610.0 692.2 L2611.5 690.1 L2613.0 687.6 L2614.5 685.5 L2616.0 690.7 L2617.5 689.6 L2619.0 688.9 L2620.5 689.9 L2622.0 690.0 L2623.5 690.3 L2625.0 687.6 L2626.5 688.0 L2628.0 690.0 L2629.5 688.7 L2631.0 694.6 L2632.5 692.4 L2634.0 692.3 L2635.5 691.6 L2637.0 691.6 L2638.5 690.3 L2640.0 690.9 L2641.5 691.9 L2643.0 691.6 L2644.5 690.0 L2646.0 684.3 L2647.5 691.1 L2649.0 691.0 L2650.5 690.0 L2652.0 689.3 L2653.5 694.2 L2655.0 687.6 L2656.5 690.7 L2658.0 689.5 L2659.5 689.1 L2661.0 695.2 L2662.5 689.9 L2664.0 688.4 L2665.5 690.6 L2667.0 693.0 L2668.5 691.8 L2670.0 690.8 L2671.5 690.0 L2673.0 687.4 L2674.5 692.5 L2676.0 694.9 L2677.5 689.0 L2679.0 688.5 L2680.5 691.4 L2682.0 689.5 L2683.5 689.4 L2685.0 688.6 L2686.5 690.9 L2688.0 690.2 L2689.5 694.6 L2691.0 693.0 L2692.5 692.4 L2694.0 692.2 L2695.5 692.1 L2697.0 687.8 L2698.5 688.3 L2700.0 687.7 L2701.5 686.2 L2703.0 689.9 L2704.5 689.9 L2706.0 691.0 L2707.5 687.9 L2709.0 689.3 L2710.5 690.0 L2712.0 690.4 L2713.5 688.4 L2715.0 691.6 L2716.5 688.8 L2718.0 691.5 L2719.5 690.2 L2721.0 690.5 L2722.5 682.7 L2724.0 691.1 L2725.5 688.9 L2727.0 690.4 L2728.5 687.1 L2730.0 687.1 L2731.5 687.6 L2733.0 689.9 L2734.5 690.2 L2736.0 686.4 L2737.5 680.5 L2739.0 688.5 L2740.5 688.8 L2742.0 688.8 L2743.5 689.2 L2745.0 688.1 L2746.5 688.1 L2748.0 689.3 L2749.5 689.9 L2751.0 688.2 L2752.5 687.4 L2754.0 688.5 L2755.5 691.8 L2757.0 688.4 L2758.5 688.9 L2760.0 686.7 L2761.5 693.5 L2763.0 686.8 L2764.5 689.0 L2766.0 685.2 L2767.5 685.4 L2769.0 687.0 L2770.5 684.8 L2772.0 687.9 L2773.5 686.4 L2775.0 686.6 L2776.5 687.0 L2778.0 687.2 L2779.5 688.9 L2781.0 690.8 L2782.5 687.8 L2784.0 690.1 L2785.5 686.8 L2787.0 690.6 L2788.5 689.0 L2790.0 691.2 L2791.5 692.7 L2793.0 690.2 L2794.5 687.2 L2796.0 689.9 L2797.5 688.7 L2799.0 687.8 L2800.5 689.2 L2802.0 691.8 L2803.5 689.4 L2805.0 688.9 L2806.5 688.9 L2808.0 689.9 L2809.5 689.9 L2811.0 690.0 L2812.5 695.5 L2814.0 691.8 L2815.5 691.7 L2817.0 692.8 L2818.5 691.6 L2820.0 690.0 L2821.5 691.1 L2823.0 691.2 L2824.5 692.5 L2826.0 691.8 L2827.5 693.1 L2829.0 690.3 L2830.5 691.3 L2832.0 691.8 L2833.5 694.0 L2835.0 694.6 L2836.5 694.5 L2838.0 695.7 L2839.5 692.1 L2841.0 694.0 L2842.5 691.6 L2844.0 693.9 L2845.5 691.5 L2847.0 689.2 L2848.5 692.4 L2850.0 693.3 L2851.5 694.8 L2853.0 692.0 L2854.5 692.2 L2856.0 691.0 L2857.5 693.4 L2859.0 690.0 L2860.5 692.4 L2862.0 693.3 L2863.5 691.9 L2865.0 691.7 L2866.5 690.2 L2868.0 687.5 L2869.5 693.4 L2871.0 693.2 L2872.5 690.1 L2874.0 688.4 L2875.5 692.4 L2877.0 691.4 L2878.5 686.6 L2880.0 691.8 L2881.5 689.5 L2883.0 689.2 L2884.5 690.1 L2886.0 691.8 L2887.5 691.9 L2889.0 685.8 L2890.5 692.3 L2892.0 689.8 L2893.5 698.5 L2895.0 696.4 L2896.5 692.4 L2898.0 691.5 L2899.5 691.0 L2901.0 688.5 L2902.5 693.4 L2904.0 692.1 L2905.5 693.5 L2907.0 696.4 L2908.5 692.3 L2910.0 693.1 L2911.5 691.6 L2913.0 688.5 L2914.5 690.7 L2916.0 692.3 L2917.5 692.1 L2919.0 691.3 L2920.5 692.0 L2922.0 693.8 L2923.5 691.1 L2925.0 692.5 L2926.5 691.7 L2928.0 685.3 L2929.5 692.0 L2931.0 691.6 L2932.5 693.7 L2934.0 691.7 L2935.5 692.3 L2937.0 688.7 L2938.5 689.9 L2940.0 691.9 L2941.5 689.6 L2943.0 689.9 L2944.5 690.6 L2946.0 691.6 L2947.5 692.5 L2949.0 691.9 L2950.5 692.9 L2952.0 690.1 L2953.5 692.3 L2955.0 693.9 L2956.5 692.0 L2958.0 686.0 L2959.5 692.9 L2961.0 693.2 L2962.5 694.1 L2964.0 693.4 L2965.5 692.9 L2967.0 690.0 L2968.5 691.2 L2970.0 691.3 L2971.5 694.2 L2973.0 692.4 L2974.5 694.7 L2976.0 692.5 L2977.5 690.0 L2979.0 692.2 L2980.5 683.4 L2982.0 691.8 L2983.5 691.9 L2985.0 693.5 L2986.5 691.5 L2988.0 693.3 L2989.5 687.3 L2991.0 695.4 L2992.5 693.5 L2994.0 692.6 L2995.5 693.3 L2997.0 692.8 L2998.5 688.6 L3000.0 691.9 L3001.5 689.9 L3003.0 690.5 L3004.5 689.8 L3006.0 689.8 L3007.5 690.2 L3009.0 692.2 L3010.5 688.0 L3012.0 687.3 L3013.5 689.1 L3015.0 690.1 L3016.5 690.2 L3018.0 689.5 L3019.5 688.1 L3021.0 685.7 L3022.5 688.3 L3024.0 690.1 L3025.5 689.6 L3027.0 689.3 L3028.5 686.5 L3030.0 689.0 L3031.5 689.5 L3033.0 689.4 L3034.5 688.0 L3036.0 687.5 L3037.5 687.6 L3039.0 688.3 L3040.5 687.6 L3042.0 690.0 L3043.5 687.2 L3045.0 687.5 L3046.5 688.1 L3048.0 693.3 L3049.5 688.0 L3051.0 688.7 L3052.5 682.8 L3054.0 689.7 L3055.5 685.3 L3057.0 689.9 L3058.5 688.6 L3060.0 688.7 L3061.5 686.8 L3063.0 689.6 L3064.5 683.2 L3066.0 689.2 L3067.5 687.5 L3069.0 687.2 L3070.5 688.4 L3072.0 688.8 L3073.5 690.5 L3075.0 692.6 L3076.5 689.9 L3078.0 689.4 L3079.5 688.9 L3081.0 682.1 L3082.5 688.9 L3084.0 692.3 L3085.5 687.2 L3087.0 691.7 L3088.5 692.2 L3090.0 692.7 L3091.5 691.8 L3093.0 688.8 L3094.5 691.2 L3096.0 692.2 L3097.5 691.4 L3099.0 692.8 L3100.5 688.7 L3102.0 689.9 L3103.5 686.9 L3105.0 691.1 L3106.5 688.8 L3108.0 684.6 L3109.5 691.9 L3111.0 689.9 L3112.5 688.9 L3114.0 693.1 L3115.5 691.6 L3117.0 690.3 L3118.5 690.8 L3120.0 693.0 L3121.5 689.0 L3123.0 689.0 L3124.5 689.6 L3126.0 690.6 L3127.5 690.9 L3129.0 689.9 L3130.5 689.7 L3132.0 691.5 L3133.5 691.4 L3135.0 689.4 L3136.5 690.1 L3138.0 688.5 L3139.5 689.5 L3139.5 715.9 L3138.0 719.1 L3136.5 713.4 L3135.0 716.8 L3133.5 717.7 L3132.0 716.0 L3130.5 716.3 L3129.0 717.7 L3127.5 715.9 L3126.0 716.4 L3124.5 719.6 L3123.0 719.7 L3121.5 717.5 L3120.0 718.0 L3118.5 717.4 L3117.0 723.4 L3115.5 717.8 L3114.0 718.8 L3112.5 718.5 L3111.0 715.6 L3109.5 713.8 L3108.0 716.6 L3106.5 716.2 L3105.0 718.0 L3103.5 717.6 L3102.0 715.9 L3100.5 712.4 L3099.0 716.8 L3097.5 718.5 L3096.0 716.5 L3094.5 719.5 L3093.0 718.5 L3091.5 719.9 L3090.0 716.0 L3088.5 716.9 L3087.0 719.1 L3085.5 720.6 L3084.0 718.2 L3082.5 717.8 L3081.0 719.0 L3079.5 721.7 L3078.0 715.6 L3076.5 717.7 L3075.0 714.3 L3073.5 714.7 L3072.0 717.4 L3070.5 716.0 L3069.0 719.1 L3067.5 718.5 L3066.0 717.4 L3064.5 716.8 L3063.0 715.1 L3061.5 711.4 L3060.0 717.3 L3058.5 716.6 L3057.0 715.8 L3055.5 716.1 L3054.0 718.3 L3052.5 719.2 L3051.0 715.5 L3049.5 719.8 L3048.0 721.6 L3046.5 718.7 L3045.0 719.0 L3043.5 716.3 L3042.0 715.1 L3040.5 716.5 L3039.0 720.9 L3037.5 717.5 L3036.0 719.6 L3034.5 714.7 L3033.0 714.9 L3031.5 715.5 L3030.0 717.2 L3028.5 716.8 L3027.0 715.3 L3025.5 716.8 L3024.0 717.1 L3022.5 718.2 L3021.0 716.4 L3019.5 717.0 L3018.0 711.5 L3016.5 716.6 L3015.0 717.9 L3013.5 717.2 L3012.0 721.9 L3010.5 716.9 L3009.0 714.6 L3007.5 717.0 L3006.0 716.0 L3004.5 714.0 L3003.0 723.7 L3001.5 710.7 L3000.0 715.8 L2998.5 716.1 L2997.0 717.8 L2995.5 717.8 L2994.0 715.5 L2992.5 714.1 L2991.0 713.0 L2989.5 708.7 L2988.0 716.3 L2986.5 713.3 L2985.0 713.0 L2983.5 722.1 L2982.0 715.6 L2980.5 724.1 L2979.0 713.5 L2977.5 715.2 L2976.0 715.2 L2974.5 718.0 L2973.0 715.5 L2971.5 717.3 L2970.0 714.9 L2968.5 714.2 L2967.0 718.0 L2965.5 716.2 L2964.0 718.2 L2962.5 716.0 L2961.0 715.5 L2959.5 717.1 L2958.0 714.9 L2956.5 715.4 L2955.0 716.1 L2953.5 715.9 L2952.0 712.8 L2950.5 717.0 L2949.0 714.0 L2947.5 716.8 L2946.0 719.4 L2944.5 717.7 L2943.0 722.5 L2941.5 718.1 L2940.0 714.4 L2938.5 716.0 L2937.0 716.6 L2935.5 712.7 L2934.0 716.2 L2932.5 714.5 L2931.0 715.8 L2929.5 717.9 L2928.0 714.4 L2926.5 715.4 L2925.0 715.6 L2923.5 715.6 L2922.0 717.4 L2920.5 714.5 L2919.0 717.2 L2917.5 716.0 L2916.0 714.4 L2914.5 713.7 L2913.0 717.3 L2911.5 717.7 L2910.0 717.7 L2908.5 718.8 L2907.0 716.0 L2905.5 718.6 L2904.0 715.6 L2902.5 714.9 L2901.0 716.8 L2899.5 716.2 L2898.0 717.8 L2896.5 715.0 L2895.0 725.5 L2893.5 716.6 L2892.0 715.7 L2890.5 713.5 L2889.0 716.5 L2887.5 716.7 L2886.0 715.0 L2884.5 714.9 L2883.0 721.9 L2881.5 715.1 L2880.0 715.2 L2878.5 714.4 L2877.0 715.7 L2875.5 717.1 L2874.0 714.6 L2872.5 716.7 L2871.0 716.7 L2869.5 721.9 L2868.0 717.0 L2866.5 716.3 L2865.0 717.0 L2863.5 718.0 L2862.0 717.6 L2860.5 716.8 L2859.0 718.5 L2857.5 715.8 L2856.0 716.1 L2854.5 713.6 L2853.0 714.7 L2851.5 720.2 L2850.0 718.7 L2848.5 716.1 L2847.0 716.4 L2845.5 717.1 L2844.0 718.0 L2842.5 717.5 L2841.0 715.7 L2839.5 717.5 L2838.0 715.3 L2836.5 716.7 L2835.0 718.2 L2833.5 717.5 L2832.0 714.6 L2830.5 715.0 L2829.0 713.7 L2827.5 714.3 L2826.0 714.1 L2824.5 715.4 L2823.0 715.9 L2821.5 717.8 L2820.0 717.1 L2818.5 717.8 L2817.0 716.5 L2815.5 718.6 L2814.0 721.8 L2812.5 723.7 L2811.0 715.8 L2809.5 717.0 L2808.0 722.6 L2806.5 713.4 L2805.0 717.7 L2803.5 716.6 L2802.0 714.6 L2800.5 717.8 L2799.0 716.1 L2797.5 717.1 L2796.0 715.5 L2794.5 716.9 L2793.0 717.6 L2791.5 723.2 L2790.0 720.2 L2788.5 720.4 L2787.0 718.0 L2785.5 718.4 L2784.0 717.1 L2782.5 715.6 L2781.0 717.4 L2779.5 713.8 L2778.0 714.9 L2776.5 714.8 L2775.0 716.6 L2773.5 715.4 L2772.0 717.0 L2770.5 720.6 L2769.0 716.6 L2767.5 720.8 L2766.0 715.9 L2764.5 714.9 L2763.0 720.2 L2761.5 715.2 L2760.0 720.7 L2758.5 716.9 L2757.0 717.6 L2755.5 716.0 L2754.0 712.0 L2752.5 716.0 L2751.0 719.5 L2749.5 717.5 L2748.0 716.5 L2746.5 720.2 L2745.0 718.6 L2743.5 723.4 L2742.0 716.7 L2740.5 718.2 L2739.0 722.1 L2737.5 720.2 L2736.0 716.1 L2734.5 717.8 L2733.0 720.0 L2731.5 716.5 L2730.0 719.9 L2728.5 718.2 L2727.0 720.4 L2725.5 717.4 L2724.0 717.6 L2722.5 717.7 L2721.0 718.1 L2719.5 718.0 L2718.0 716.0 L2716.5 715.7 L2715.0 718.4 L2713.5 714.3 L2712.0 718.0 L2710.5 713.9 L2709.0 718.0 L2707.5 716.0 L2706.0 717.3 L2704.5 714.7 L2703.0 718.9 L2701.5 716.3 L2700.0 716.2 L2698.5 714.0 L2697.0 714.6 L2695.5 719.3 L2694.0 717.3 L2692.5 717.4 L2691.0 718.5 L2689.5 716.1 L2688.0 717.5 L2686.5 717.3 L2685.0 713.7 L2683.5 717.0 L2682.0 715.5 L2680.5 717.4 L2679.0 716.1 L2677.5 715.6 L2676.0 718.1 L2674.5 717.9 L2673.0 721.4 L2671.5 718.9 L2670.0 713.9 L2668.5 715.5 L2667.0 719.4 L2665.5 718.5 L2664.0 717.5 L2662.5 716.0 L2661.0 715.6 L2659.5 716.8 L2658.0 718.7 L2656.5 717.4 L2655.0 720.6 L2653.5 719.8 L2652.0 717.3 L2650.5 717.3 L2649.0 715.2 L2647.5 716.7 L2646.0 718.2 L2644.5 718.1 L2643.0 719.4 L2641.5 718.8 L2640.0 718.1 L2638.5 720.3 L2637.0 718.4 L2635.5 719.2 L2634.0 721.0 L2632.5 718.8 L2631.0 716.2 L2629.5 718.3 L2628.0 719.4 L2626.5 718.2 L2625.0 724.4 L2623.5 717.6 L2622.0 718.0 L2620.5 718.1 L2619.0 716.3 L2617.5 713.5 L2616.0 716.6 L2614.5 719.1 L2613.0 715.8 L2611.5 717.1 L2610.0 715.8 L2608.5 717.1 L2607.0 717.5 L2605.5 719.5 L2604.0 719.3 L2602.5 719.2 L2601.0 717.8 L2599.5 721.8 L2598.0 719.4 L2596.5 721.0 L2595.0 717.6 L2593.5 717.8 L2592.0 717.9 L2590.5 717.4 L2589.0 715.1 L2587.5 716.0 L2586.0 717.3 L2584.5 716.3 L2583.0 718.0 L2581.5 711.4 L2580.0 715.8 L2578.5 716.0 L2577.0 716.7 L2575.5 716.7 L2574.0 717.1 L2572.5 718.1 L2571.0 715.8 L2569.5 715.3 L2568.0 708.6 L2566.5 713.7 L2565.0 717.4 L2563.5 714.7 L2562.0 716.8 L2560.5 715.4 L2559.0 714.5 L2557.5 713.7 L2556.0 720.0 L2554.5 713.2 L2553.0 713.9 L2551.5 712.9 L2550.0 717.5 L2548.5 714.8 L2547.0 717.3 L2545.5 714.1 L2544.0 714.4 L2542.5 713.1 L2541.0 712.6 L2539.5 713.3 L2538.0 709.9 L2536.5 716.0 L2535.0 714.6 L2533.5 714.4 L2532.0 716.8 L2530.5 714.7 L2529.0 716.7 L2527.5 714.8 L2526.0 716.6 L2524.5 713.9 L2523.0 712.1 L2521.5 715.7 L2520.0 715.6 L2518.5 716.5 L2517.0 713.1 L2515.5 711.7 L2514.0 713.4 L2512.5 715.5 L2511.0 712.1 L2509.5 715.6 L2508.0 723.0 L2506.5 715.7 L2505.0 712.7 L2503.5 714.5 L2502.0 714.2 L2500.5 712.9 L2499.0 721.3 L2497.5 714.1 L2496.0 722.3 L2494.5 713.6 L2493.0 713.0 L2491.5 714.9 L2490.0 708.8 L2488.5 714.3 L2487.0 717.4 L2485.5 715.8 L2484.0 714.4 L2482.5 722.0 L2481.0 716.6 L2479.5 714.4 L2478.0 713.6 L2476.5 716.2 L2475.0 714.9 L2473.5 718.1 L2472.0 715.3 L2470.5 717.1 L2469.0 716.7 L2467.5 714.6 L2466.0 715.1 L2464.5 718.8 L2463.0 712.3 L2461.5 712.2 L2460.0 716.7 L2458.5 714.8 L2457.0 714.7 L2455.5 715.3 L2454.0 716.1 L2452.5 715.3 L2451.0 716.0 L2449.5 716.9 L2448.0 716.0 L2446.5 714.2 L2445.0 716.3 L2443.5 718.3 L2442.0 718.0 L2440.5 716.7 L2439.0 722.2 L2437.5 717.9 L2436.0 717.7 L2434.5 716.5 L2433.0 718.6 L2431.5 718.7 L2430.0 718.4 L2428.5 717.7 L2427.0 709.0 L2425.5 718.1 L2424.0 714.4 L2422.5 716.0 L2421.0 710.0 L2419.5 715.8 L2418.0 715.9 L2416.5 716.4 L2415.0 715.2 L2413.5 714.0 L2412.0 714.4 L2410.5 714.9 L2409.0 712.7 L2407.5 714.5 L2406.0 713.3 L2404.5 720.3 L2403.0 714.6 L2401.5 713.5 L2400.0 712.6 L2398.5 720.1 L2397.0 716.0 L2395.5 717.8 L2394.0 716.3 L2392.5 719.3 L2391.0 713.9 L2389.5 712.3 L2388.0 715.4 L2386.5 716.5 L2385.0 716.8 L2383.5 714.8 L2382.0 715.3 L2380.5 712.3 L2379.0 714.1 L2377.5 714.4 L2376.0 713.6 L2374.5 716.7 L2373.0 715.8 L2371.5 717.5 L2370.0 716.7 L2368.5 716.8 L2367.0 713.5 L2365.5 716.2 L2364.0 717.2 L2362.5 716.4 L2361.0 714.8 L2359.5 715.5 L2358.0 718.8 L2356.5 716.1 L2355.0 715.4 L2353.5 719.0 L2352.0 723.0 L2350.5 719.7 L2349.0 719.7 L2347.5 718.6 L2346.0 719.1 L2344.5 720.3 L2343.0 720.5 L2341.5 719.5 L2340.0 721.4 L2338.5 721.4 L2337.0 719.5 L2335.5 717.8 L2334.0 715.6 L2332.5 716.8 L2331.0 718.8 L2329.5 720.3 L2328.0 719.8 L2326.5 721.6 L2325.0 717.3 L2323.5 721.3 L2322.0 719.3 L2320.5 719.8 L2319.0 720.4 L2317.5 716.9 L2316.0 720.4 L2314.5 719.3 L2313.0 720.7 L2311.5 721.3 L2310.0 720.4 L2308.5 716.0 L2307.0 717.1 L2305.5 720.2 L2304.0 716.9 L2302.5 717.1 L2301.0 711.4 L2299.5 716.8 L2298.0 716.5 L2296.5 722.2 L2295.0 716.8 L2293.5 716.2 L2292.0 717.0 L2290.5 717.4 L2289.0 718.8 L2287.5 717.3 L2286.0 710.6 L2284.5 718.0 L2283.0 719.2 L2281.5 716.2 L2280.0 715.7 L2278.5 716.0 L2277.0 713.7 L2275.5 715.3 L2274.0 714.2 L2272.5 714.3 L2271.0 716.3 L2269.5 715.6 L2268.0 716.1 L2266.5 718.5 L2265.0 711.0 L2263.5 714.5 L2262.0 714.5 L2260.5 714.8 L2259.0 717.7 L2257.5 716.7 L2256.0 719.8 L2254.5 717.9 L2253.0 716.5 L2251.5 713.5 L2250.0 713.6 L2248.5 711.9 L2247.0 715.0 L2245.5 716.3 L2244.0 714.4 L2242.5 715.0 L2241.0 716.8 L2239.5 717.6 L2238.0 716.7 L2236.5 716.2 L2235.0 716.1 L2233.5 717.8 L2232.0 717.3 L2230.5 714.9 L2229.0 718.7 L2227.5 713.3 L2226.0 720.3 L2224.5 717.1 L2223.0 717.4 L2221.5 716.7 L2220.0 717.5 L2218.5 720.8 L2217.0 718.2 L2215.5 718.7 L2214.0 717.2 L2212.5 716.1 L2211.0 721.6 L2209.5 718.9 L2208.0 719.7 L2206.5 720.0 L2205.0 717.3 L2203.5 718.9 L2202.0 718.9 L2200.5 716.6 L2199.0 715.9 L2197.5 713.4 L2196.0 715.6 L2194.5 714.2 L2193.0 715.4 L2191.5 718.6 L2190.0 716.2 L2188.5 714.5 L2187.0 717.4 L2185.5 715.5 L2184.0 714.0 L2182.5 716.7 L2181.0 717.0 L2179.5 716.5 L2178.0 719.5 L2176.5 719.5 L2175.0 717.7 L2173.5 724.7 L2172.0 716.1 L2170.5 716.4 L2169.0 715.8 L2167.5 720.8 L2166.0 713.8 L2164.5 714.9 L2163.0 725.2 L2161.5 716.6 L2160.0 710.4 L2158.5 717.3 L2157.0 718.6 L2155.5 716.4 L2154.0 716.3 L2152.5 717.2 L2151.0 717.6 L2149.5 720.2 L2148.0 715.5 L2146.5 722.5 L2145.0 717.1 L2143.5 715.6 L2142.0 715.8 L2140.5 718.4 L2139.0 713.5 L2137.5 715.5 L2136.0 712.6 L2134.5 717.2 L2133.0 714.1 L2131.5 720.6 L2130.0 716.7 L2128.5 715.5 L2127.0 716.3 L2125.5 714.4 L2124.0 714.1 L2122.5 714.9 L2121.0 716.0 L2119.5 716.8 L2118.0 711.7 L2116.5 714.6 L2115.0 716.4 L2113.5 717.9 L2112.0 716.4 L2110.5 716.4 L2109.0 717.9 L2107.5 716.2 L2106.0 716.5 L2104.5 717.7 L2103.0 715.5 L2101.5 717.9 L2100.0 716.7 L2098.5 716.7 L2097.0 715.1 L2095.5 713.0 L2094.0 716.2 L2092.5 715.2 L2091.0 712.6 L2089.5 715.4 L2088.0 716.5 L2086.5 716.6 L2085.0 713.4 L2083.5 715.1 L2082.0 715.2 L2080.5 717.2 L2079.0 715.0 L2077.5 716.9 L2076.0 715.7 L2074.5 717.6 L2073.0 716.7 L2071.5 716.9 L2070.0 713.4 L2068.5 714.3 L2067.0 715.4 L2065.5 715.4 L2064.0 718.0 L2062.5 716.4 L2061.0 717.0 L2059.5 718.0 L2058.0 717.0 L2056.5 718.5 L2055.0 714.4 L2053.5 715.0 L2052.0 723.3 L2050.5 717.7 L2049.0 713.9 L2047.5 715.1 L2046.0 714.0 L2044.5 721.2 L2043.0 717.4 L2041.5 717.0 L2040.0 716.6 L2038.5 719.0 L2037.0 715.1 L2035.5 715.6 L2034.0 715.8 L2032.5 718.1 L2031.0 718.6 L2029.5 716.9 L2028.0 718.9 L2026.5 719.2 L2025.0 719.9 L2023.5 725.8 L2022.0 717.1 L2020.5 719.5 L2019.0 717.4 L2017.5 719.3 L2016.0 718.6 L2014.5 716.3 L2013.0 715.9 L2011.5 719.1 L2010.0 718.8 L2008.5 721.7 L2007.0 717.1 L2005.5 714.3 L2004.0 716.9 L2002.5 716.4 L2001.0 715.9 L1999.5 718.2 L1998.0 719.4 L1996.5 717.2 L1995.0 717.2 L1993.5 715.3 L1992.0 722.5 L1990.5 709.5 L1989.0 712.7 L1987.5 716.8 L1986.0 716.4 L1984.5 719.6 L1983.0 718.9 L1981.5 717.0 L1980.0 716.5 L1978.5 717.5 L1977.0 717.4 L1975.5 717.7 L1974.0 714.8 L1972.5 715.5 L1971.0 716.2 L1969.5 718.1 L1968.0 717.6 L1966.5 716.0 L1965.0 717.5 L1963.5 718.4 L1962.0 716.9 L1960.5 718.6 L1959.0 715.2 L1957.5 716.9 L1956.0 715.5 L1954.5 716.5 L1953.0 714.5 L1951.5 715.9 L1950.0 713.6 L1948.5 714.3 L1947.0 714.3 L1945.5 715.6 L1944.0 712.9 L1942.5 712.6 L1941.0 716.0 L1939.5 716.6 L1938.0 715.7 L1936.5 719.8 L1935.0 715.6 L1933.5 722.3 L1932.0 718.9 L1930.5 717.0 L1929.0 716.4 L1927.5 717.1 L1926.0 715.8 L1924.5 720.8 L1923.0 719.7 L1921.5 715.4 L1920.0 717.1 L1918.5 717.3 L1917.0 716.7 L1915.5 718.8 L1914.0 719.7 L1912.5 727.5 L1911.0 720.9 L1909.5 719.9 L1908.0 719.3 L1906.5 721.1 L1905.0 719.2 L1903.5 721.5 L1902.0 718.9 L1900.5 717.8 L1899.0 718.5 L1897.5 719.7 L1896.0 720.2 L1894.5 717.7 L1893.0 717.3 L1891.5 719.4 L1890.0 717.0 L1888.5 715.2 L1887.0 719.5 L1885.5 713.3 L1884.0 721.0 L1882.5 722.3 L1881.0 720.4 L1879.5 718.2 L1878.0 720.4 L1876.5 716.2 L1875.0 723.4 L1873.5 720.4 L1872.0 718.8 L1870.5 720.4 L1869.0 720.1 L1867.5 715.4 L1866.0 719.5 L1864.5 716.4 L1863.0 711.7 L1861.5 720.6 L1860.0 715.5 L1858.5 718.5 L1857.0 718.0 L1855.5 716.9 L1854.0 713.5 L1852.5 717.3 L1851.0 716.9 L1849.5 716.1 L1848.0 718.2 L1846.5 718.6 L1845.0 717.4 L1843.5 717.6 L1842.0 719.7 L1840.5 715.6 L1839.0 715.9 L1837.5 714.4 L1836.0 717.2 L1834.5 717.2 L1833.0 717.8 L1831.5 715.7 L1830.0 718.2 L1828.5 717.9 L1827.0 716.7 L1825.5 708.6 L1824.0 714.8 L1822.5 718.2 L1821.0 716.7 L1819.5 715.5 L1818.0 718.5 L1816.5 716.1 L1815.0 717.9 L1813.5 715.7 L1812.0 714.0 L1810.5 717.5 L1809.0 716.9 L1807.5 723.4 L1806.0 716.7 L1804.5 713.7 L1803.0 715.0 L1801.5 716.5 L1800.0 718.1 L1798.5 717.4 L1797.0 717.9 L1795.5 715.3 L1794.0 717.1 L1792.5 712.7 L1791.0 716.2 L1789.5 716.3 L1788.0 715.1 L1786.5 719.1 L1785.0 715.1 L1783.5 714.7 L1782.0 715.6 L1780.5 717.1 L1779.0 718.6 L1777.5 716.9 L1776.0 718.3 L1774.5 713.3 L1773.0 714.9 L1771.5 715.4 L1770.0 709.5 L1768.5 716.1 L1767.0 716.0 L1765.5 716.0 L1764.0 716.8 L1762.5 717.4 L1761.0 717.3 L1759.5 715.5 L1758.0 718.3 L1756.5 719.4 L1755.0 719.4 L1753.5 718.5 L1752.0 715.7 L1750.5 718.0 L1749.0 717.9 L1747.5 716.6 L1746.0 718.6 L1744.5 717.2 L1743.0 716.7 L1741.5 716.9 L1740.0 715.2 L1738.5 716.3 L1737.0 717.5 L1735.5 717.3 L1734.0 717.8 L1732.5 716.1 L1731.0 716.8 L1729.5 716.8 L1728.0 718.0 L1726.5 719.1 L1725.0 717.8 L1723.5 717.3 L1722.0 723.9 L1720.5 718.5 L1719.0 717.7 L1717.5 716.1 L1716.0 714.1 L1714.5 716.2 L1713.0 716.1 L1711.5 717.0 L1710.0 714.0 L1708.5 717.0 L1707.0 717.4 L1705.5 713.8 L1704.0 716.9 L1702.5 719.4 L1701.0 715.6 L1699.5 715.9 L1698.0 718.3 L1696.5 715.6 L1695.0 715.3 L1693.5 714.7 L1692.0 717.0 L1690.5 714.0 L1689.0 715.3 L1687.5 715.1 L1686.0 713.8 L1684.5 716.5 L1683.0 715.0 L1681.5 716.4 L1680.0 717.4 L1678.5 718.7 L1677.0 716.8 L1675.5 718.8 L1674.0 713.6 L1672.5 714.8 L1671.0 715.4 L1669.5 714.6 L1668.0 718.2 L1666.5 716.0 L1665.0 723.3 L1663.5 717.3 L1662.0 717.9 L1660.5 715.9 L1659.0 722.0 L1657.5 714.2 L1656.0 716.7 L1654.5 715.0 L1653.0 718.0 L1651.5 717.9 L1650.0 716.5 L1648.5 711.0 L1647.0 717.2 L1645.5 714.2 L1644.0 716.9 L1642.5 716.8 L1641.0 717.7 L1639.5 716.4 L1638.0 718.2 L1636.5 717.9 L1635.0 715.0 L1633.5 718.4 L1632.0 711.0 L1630.5 717.5 L1629.0 718.8 L1627.5 722.5 L1626.0 721.2 L1624.5 719.9 L1623.0 723.4 L1621.5 718.2 L1620.0 714.0 L1618.5 718.7 L1617.0 723.7 L1615.5 721.3 L1614.0 725.6 L1612.5 727.4 L1611.0 727.0 L1609.5 724.5 L1608.0 719.1 L1606.5 704.3 L1605.0 704.7 L1603.5 704.5 L1602.0 704.7 L1600.5 705.1 L1599.0 704.6 L1597.5 705.3 L1596.0 704.6 L1594.5 704.6 L1593.0 705.1 L1591.5 705.7 L1590.0 705.7 L1588.5 705.8 L1587.0 705.3 L1585.5 705.8 L1584.0 705.8 L1582.5 706.0 L1581.0 706.0 L1579.5 706.7 L1578.0 706.2 L1576.5 706.6 L1575.0 706.7 L1573.5 705.7 L1572.0 707.1 L1570.5 706.2 L1569.0 707.5 L1567.5 706.3 L1566.0 706.8 L1564.5 707.1 L1563.0 707.2 L1561.5 706.9 L1560.0 707.6 L1558.5 706.6 L1557.0 708.0 L1555.5 707.3 L1554.0 706.8 L1552.5 707.0 L1551.0 709.1 L1549.5 709.2 L1548.0 709.3 L1546.5 708.9 L1545.0 708.0 L1543.5 708.8 L1542.0 709.4 L1540.5 708.7 L1539.0 709.2 L1537.5 708.4 L1536.0 710.8 L1534.5 709.4 L1533.0 709.9 L1531.5 710.8 L1530.0 711.2 L1528.5 708.3 L1527.0 710.5 L1525.5 710.3 L1524.0 712.4 L1522.5 709.7 L1521.0 711.1 L1519.5 713.1 L1518.0 709.8 L1516.5 711.7 L1515.0 712.4 L1513.5 709.5 L1512.0 711.3 L1510.5 713.2 L1509.0 711.7 L1507.5 713.0 L1506.0 712.6 L1504.5 712.0 L1503.0 711.3 L1501.5 713.2 L1500.0 714.7 L1498.5 713.5 L1497.0 714.1 L1495.5 712.9 L1494.0 714.7 L1492.5 712.7 L1491.0 715.9 L1489.5 712.1 L1488.0 714.4 L1486.5 711.4 L1485.0 714.2 L1483.5 712.9 L1482.0 714.7 L1480.5 713.1 L1479.0 714.5 L1477.5 714.4 L1476.0 715.6 L1474.5 712.3 L1473.0 718.7 L1471.5 717.3 L1470.0 712.5 L1468.5 715.6 L1467.0 712.9 L1465.5 718.5 L1464.0 716.2 L1462.5 714.9 L1461.0 719.5 L1459.5 716.2 L1458.0 726.2 L1456.5 731.0 L1455.0 732.5 L1453.5 731.0 L1452.0 726.2 L1450.5 716.2 L1449.0 704.5 L1447.5 704.5 L1446.0 704.5 L1444.5 704.5 L1443.0 704.5 L1441.5 704.5 L1440.0 704.5 L1438.5 704.5 L1437.0 704.5 L1435.5 704.5 L1434.0 704.5 L1432.5 704.5 L1431.0 704.5 L1429.5 704.5 L1428.0 704.5 L1426.5 704.5 L1425.0 704.5 L1423.5 704.5 L1422.0 704.5 L1420.5 704.5 L1419.0 704.5 L1417.5 704.5 L1416.0 704.5 L1414.5 704.5 L1413.0 704.5 L1411.5 704.5 L1410.0 704.5 L1408.5 704.5 L1407.0 704.5 L1405.5 704.5 L1404.0 704.5 L1402.5 704.5 L1401.0 704.5 L1399.5 704.5 L1398.0 704.5 L1396.5 704.5 L1395.0 704.5 L1393.5 704.5 L1392.0 704.5 L1390.5 704.5 L1389.0 704.5 L1387.5 704.5 L1386.0 704.5 L1384.5 704.5 L1383.0 704.5 L1381.5 704.5 L1380.0 704.5 L1378.5 704.5 L1377.0 704.5 L1375.5 704.5 L1374.0 704.5 L1372.5 704.5 L1371.0 704.5 L1369.5 704.5 L1368.0 704.5 L1366.5 704.5 L1365.0 704.5 L1363.5 704.5 L1362.0 704.5 L1360.5 704.5 L1359.0 704.5 L1357.5 704.5 L1356.0 704.5 L1354.5 704.5 L1353.0 704.5 L1351.5 704.5 L1350.0 704.5 L1348.5 704.5 L1347.0 704.5 L1345.5 704.5 L1344.0 704.5 L1342.5 704.5 L1341.0 704.5 L1339.5 704.5 L1338.0 704.5 L1336.5 704.5 L1335.0 704.5 L1333.5 704.5 L1332.0 704.5 L1330.5 704.5 L1329.0 704.5 L1327.5 704.5 L1326.0 704.5 Z"/><path d="M1326.0 765.0 L1327.5 765.0 L1329.0 765.0 L1330.5 765.0 L1332.0 765.0 L1333.5 765.0 L1335.0 765.0 L1336.5 765.0 L1338.0 765.0 L1339.5 765.0 L1341.0 765.0 L1342.5 765.0 L1344.0 765.0 L1345.5 765.0 L1347.0 765.0 L1348.5 765.0 L1350.0 765.0 L1351.5 765.0 L1353.0 765.0 L1354.5 765.0 L1356.0 765.0 L1357.5 765.0 L1359.0 765.0 L1360.5 765.0 L1362.0 765.0 L1363.5 765.0 L1365.0 765.0 L1366.5 765.0 L1368.0 765.0 L1369.5 765.0 L1371.0 765.0 L1372.5 765.0 L1374.0 765.0 L1375.5 765.0 L1377.0 765.0 L1378.5 765.0 L1380.0 765.0 L1381.5 765.0 L1383.0 765.0 L1384.5 765.0 L1386.0 765.0 L1387.5 765.0 L1389.0 765.0 L1390.5 765.0 L1392.0 765.0 L1393.5 765.0 L1395.0 765.0 L1396.5 765.0 L1398.0 765.0 L1399.5 765.0 L1401.0 765.0 L1402.5 765.0 L1404.0 765.0 L1405.5 765.0 L1407.0 765.0 L1408.5 765.0 L1410.0 765.0 L1411.5 765.0 L1413.0 765.0 L1414.5 765.0 L1416.0 765.0 L1417.5 765.0 L1419.0 765.0 L1420.5 765.0 L1422.0 765.0 L1423.5 765.0 L1425.0 765.0 L1426.5 765.0 L1428.0 765.0 L1429.5 765.0 L1431.0 765.0 L1432.5 765.0 L1434.0 765.0 L1435.5 765.0 L1437.0 765.0 L1438.5 765.0 L1440.0 765.0 L1441.5 765.0 L1443.0 765.0 L1444.5 765.0 L1446.0 765.0 L1447.5 765.0 L1449.0 765.0 L1450.5 753.3 L1452.0 743.3 L1453.5 738.5 L1455.0 737.0 L1456.5 738.5 L1458.0 743.3 L1459.5 753.3 L1461.0 749.2 L1462.5 756.1 L1464.0 750.5 L1465.5 751.9 L1467.0 752.5 L1468.5 752.8 L1470.0 754.0 L1471.5 752.2 L1473.0 750.8 L1474.5 754.4 L1476.0 757.2 L1477.5 754.6 L1479.0 755.3 L1480.5 754.5 L1482.0 756.4 L1483.5 756.0 L1485.0 755.0 L1486.5 754.2 L1488.0 753.1 L1489.5 754.2 L1491.0 754.2 L1492.5 756.7 L1494.0 753.4 L1495.5 754.8 L1497.0 756.5 L1498.5 756.5 L1500.0 756.6 L1501.5 757.5 L1503.0 754.9 L1504.5 756.7 L1506.0 756.1 L1507.5 758.7 L1509.0 756.5 L1510.5 755.7 L1512.0 755.9 L1513.5 755.8 L1515.0 758.0 L1516.5 757.5 L1518.0 759.1 L1519.5 758.4 L1521.0 758.1 L1522.5 757.4 L1524.0 757.3 L1525.5 758.1 L1527.0 758.6 L1528.5 760.3 L1530.0 760.9 L1531.5 758.3 L1533.0 760.7 L1534.5 760.1 L1536.0 761.5 L1537.5 761.2 L1539.0 761.6 L1540.5 761.9 L1542.0 762.0 L1543.5 759.7 L1545.0 761.7 L1546.5 761.2 L1548.0 759.6 L1549.5 762.4 L1551.0 761.0 L1552.5 762.4 L1554.0 762.7 L1555.5 761.0 L1557.0 760.8 L1558.5 761.0 L1560.0 762.1 L1561.5 761.8 L1563.0 763.1 L1564.5 761.6 L1566.0 762.3 L1567.5 762.6 L1569.0 761.8 L1570.5 762.6 L1572.0 763.8 L1573.5 763.6 L1575.0 763.9 L1576.5 763.9 L1578.0 763.3 L1579.5 762.8 L1581.0 763.9 L1582.5 764.0 L1584.0 763.6 L1585.5 763.6 L1587.0 764.1 L1588.5 764.6 L1590.0 764.3 L1591.5 764.0 L1593.0 764.7 L1594.5 764.7 L1596.0 764.5 L1597.5 764.7 L1599.0 764.9 L1600.5 764.4 L1602.0 764.9 L1603.5 764.8 L1605.0 765.0 L1606.5 765.2 L1608.0 750.4 L1609.5 745.0 L1611.0 742.5 L1612.5 742.1 L1614.0 743.9 L1615.5 748.2 L1617.0 751.7 L1618.5 747.8 L1620.0 753.8 L1621.5 752.5 L1623.0 752.4 L1624.5 752.4 L1626.0 752.4 L1627.5 749.9 L1629.0 752.2 L1630.5 753.3 L1632.0 753.6 L1633.5 752.0 L1635.0 752.8 L1636.5 752.8 L1638.0 752.3 L1639.5 750.2 L1641.0 752.2 L1642.5 752.3 L1644.0 752.2 L1645.5 755.5 L1647.0 752.5 L1648.5 753.7 L1650.0 751.8 L1651.5 752.6 L1653.0 752.9 L1654.5 753.4 L1656.0 757.3 L1657.5 755.1 L1659.0 755.6 L1660.5 752.9 L1662.0 750.0 L1663.5 754.3 L1665.0 755.6 L1666.5 755.7 L1668.0 757.1 L1669.5 756.6 L1671.0 753.9 L1672.5 752.4 L1674.0 751.0 L1675.5 755.9 L1677.0 755.0 L1678.5 753.8 L1680.0 754.1 L1681.5 755.8 L1683.0 753.6 L1684.5 755.2 L1686.0 754.1 L1687.5 749.5 L1689.0 753.5 L1690.5 754.8 L1692.0 752.5 L1693.5 752.0 L1695.0 750.4 L1696.5 750.4 L1698.0 753.7 L1699.5 752.8 L1701.0 746.6 L1702.5 755.3 L1704.0 760.6 L1705.5 755.0 L1707.0 751.9 L1708.5 755.0 L1710.0 755.1 L1711.5 753.8 L1713.0 753.9 L1714.5 752.7 L1716.0 754.6 L1717.5 754.0 L1719.0 750.1 L1720.5 750.0 L1722.0 753.2 L1723.5 752.1 L1725.0 748.1 L1726.5 754.0 L1728.0 754.0 L1729.5 752.8 L1731.0 752.8 L1732.5 750.9 L1734.0 752.4 L1735.5 752.0 L1737.0 749.7 L1738.5 750.0 L1740.0 751.7 L1741.5 751.1 L1743.0 751.7 L1744.5 753.4 L1746.0 755.1 L1747.5 750.6 L1749.0 749.7 L1750.5 751.1 L1752.0 751.6 L1753.5 752.3 L1755.0 755.2 L1756.5 750.5 L1758.0 751.9 L1759.5 744.3 L1761.0 753.0 L1762.5 750.9 L1764.0 752.3 L1765.5 752.3 L1767.0 752.8 L1768.5 751.6 L1770.0 753.8 L1771.5 755.6 L1773.0 753.2 L1774.5 752.7 L1776.0 752.9 L1777.5 754.5 L1779.0 752.6 L1780.5 750.5 L1782.0 753.2 L1783.5 755.4 L1785.0 752.7 L1786.5 755.7 L1788.0 753.9 L1789.5 752.9 L1791.0 755.1 L1792.5 753.4 L1794.0 752.2 L1795.5 760.7 L1797.0 747.8 L1798.5 751.9 L1800.0 750.7 L1801.5 752.0 L1803.0 746.6 L1804.5 746.5 L1806.0 749.8 L1807.5 751.6 L1809.0 754.1 L1810.5 752.4 L1812.0 754.0 L1813.5 757.5 L1815.0 748.2 L1816.5 750.7 L1818.0 752.1 L1819.5 750.6 L1821.0 749.9 L1822.5 750.2 L1824.0 752.6 L1825.5 751.2 L1827.0 751.9 L1828.5 749.8 L1830.0 750.8 L1831.5 749.6 L1833.0 749.0 L1834.5 751.8 L1836.0 748.6 L1837.5 751.4 L1839.0 751.5 L1840.5 752.9 L1842.0 752.0 L1843.5 752.6 L1845.0 751.2 L1846.5 754.0 L1848.0 750.4 L1849.5 753.3 L1851.0 751.3 L1852.5 751.0 L1854.0 749.4 L1855.5 750.9 L1857.0 752.5 L1858.5 750.9 L1860.0 750.4 L1861.5 755.4 L1863.0 751.4 L1864.5 743.0 L1866.0 749.0 L1867.5 750.5 L1869.0 749.7 L1870.5 746.8 L1872.0 747.1 L1873.5 748.5 L1875.0 752.4 L1876.5 755.3 L1878.0 749.3 L1879.5 749.5 L1881.0 749.8 L1882.5 747.5 L1884.0 748.0 L1885.5 750.1 L1887.0 750.9 L1888.5 749.7 L1890.0 754.4 L1891.5 749.4 L1893.0 749.1 L1894.5 751.6 L1896.0 746.5 L1897.5 751.9 L1899.0 751.0 L1900.5 748.8 L1902.0 749.1 L1903.5 746.6 L1905.0 752.0 L1906.5 746.7 L1908.0 750.3 L1909.5 751.2 L1911.0 749.8 L1912.5 749.1 L1914.0 750.7 L1915.5 750.2 L1917.0 752.1 L1918.5 752.9 L1920.0 752.8 L1921.5 750.1 L1923.0 753.1 L1924.5 752.1 L1926.0 752.0 L1927.5 752.2 L1929.0 752.6 L1930.5 752.1 L1932.0 746.8 L1933.5 750.8 L1935.0 751.1 L1936.5 753.2 L1938.0 752.6 L1939.5 752.1 L1941.0 751.6 L1942.5 753.3 L1944.0 752.0 L1945.5 751.9 L1947.0 752.8 L1948.5 751.1 L1950.0 752.9 L1951.5 753.9 L1953.0 753.7 L1954.5 750.0 L1956.0 748.7 L1957.5 750.5 L1959.0 750.8 L1960.5 751.8 L1962.0 752.8 L1963.5 750.8 L1965.0 757.4 L1966.5 752.6 L1968.0 751.9 L1969.5 749.5 L1971.0 751.6 L1972.5 749.5 L1974.0 752.9 L1975.5 749.8 L1977.0 750.4 L1978.5 754.4 L1980.0 754.7 L1981.5 760.6 L1983.0 751.4 L1984.5 752.0 L1986.0 760.9 L1987.5 755.3 L1989.0 755.1 L1990.5 751.6 L1992.0 754.8 L1993.5 752.8 L1995.0 752.9 L1996.5 750.3 L1998.0 750.2 L1999.5 751.6 L2001.0 752.6 L2002.5 750.3 L2004.0 749.9 L2005.5 746.7 L2007.0 754.5 L2008.5 752.4 L2010.0 759.6 L2011.5 753.1 L2013.0 750.5 L2014.5 752.0 L2016.0 752.7 L2017.5 751.2 L2019.0 755.3 L2020.5 744.7 L2022.0 759.4 L2023.5 751.3 L2025.0 751.0 L2026.5 753.7 L2028.0 752.5 L2029.5 752.3 L2031.0 752.0 L2032.5 754.6 L2034.0 754.2 L2035.5 753.0 L2037.0 751.3 L2038.5 752.1 L2040.0 753.0 L2041.5 753.1 L2043.0 753.0 L2044.5 755.5 L2046.0 753.7 L2047.5 755.0 L2049.0 755.1 L2050.5 755.5 L2052.0 754.5 L2053.5 754.6 L2055.0 754.0 L2056.5 751.4 L2058.0 754.0 L2059.5 753.4 L2061.0 753.8 L2062.5 752.3 L2064.0 753.9 L2065.5 761.0 L2067.0 753.3 L2068.5 746.4 L2070.0 753.8 L2071.5 756.7 L2073.0 756.4 L2074.5 756.1 L2076.0 755.9 L2077.5 754.4 L2079.0 760.5 L2080.5 752.4 L2082.0 750.8 L2083.5 754.4 L2085.0 751.3 L2086.5 753.1 L2088.0 757.4 L2089.5 754.4 L2091.0 753.6 L2092.5 755.0 L2094.0 756.1 L2095.5 757.1 L2097.0 756.3 L2098.5 757.5 L2100.0 757.0 L2101.5 756.4 L2103.0 754.2 L2104.5 756.0 L2106.0 754.7 L2107.5 754.4 L2109.0 753.7 L2110.5 755.3 L2112.0 751.4 L2113.5 757.0 L2115.0 755.9 L2116.5 754.6 L2118.0 754.0 L2119.5 757.2 L2121.0 753.9 L2122.5 755.4 L2124.0 755.6 L2125.5 756.3 L2127.0 752.8 L2128.5 748.1 L2130.0 753.3 L2131.5 753.0 L2133.0 754.9 L2134.5 754.8 L2136.0 752.9 L2137.5 754.5 L2139.0 757.1 L2140.5 754.4 L2142.0 752.3 L2143.5 752.8 L2145.0 753.2 L2146.5 752.8 L2148.0 751.6 L2149.5 750.6 L2151.0 752.5 L2152.5 754.5 L2154.0 752.8 L2155.5 752.4 L2157.0 754.0 L2158.5 755.4 L2160.0 752.6 L2161.5 751.4 L2163.0 751.2 L2164.5 752.7 L2166.0 751.1 L2167.5 752.1 L2169.0 754.9 L2170.5 751.0 L2172.0 752.0 L2173.5 757.0 L2175.0 754.4 L2176.5 754.0 L2178.0 752.0 L2179.5 752.1 L2181.0 753.2 L2182.5 753.9 L2184.0 749.7 L2185.5 750.1 L2187.0 749.5 L2188.5 750.9 L2190.0 750.7 L2191.5 749.1 L2193.0 750.0 L2194.5 748.5 L2196.0 749.5 L2197.5 753.8 L2199.0 749.6 L2200.5 751.8 L2202.0 754.8 L2203.5 753.3 L2205.0 753.5 L2206.5 756.9 L2208.0 750.1 L2209.5 752.2 L2211.0 745.9 L2212.5 751.8 L2214.0 753.0 L2215.5 750.1 L2217.0 752.2 L2218.5 743.6 L2220.0 750.8 L2221.5 750.1 L2223.0 749.7 L2224.5 751.2 L2226.0 753.7 L2227.5 754.9 L2229.0 751.7 L2230.5 749.5 L2232.0 746.5 L2233.5 753.4 L2235.0 752.5 L2236.5 752.7 L2238.0 751.4 L2239.5 753.1 L2241.0 752.3 L2242.5 752.9 L2244.0 750.5 L2245.5 756.6 L2247.0 749.9 L2248.5 750.9 L2250.0 749.6 L2251.5 750.6 L2253.0 751.4 L2254.5 754.2 L2256.0 754.1 L2257.5 752.9 L2259.0 751.3 L2260.5 751.0 L2262.0 754.2 L2263.5 754.2 L2265.0 754.0 L2266.5 751.7 L2268.0 754.1 L2269.5 752.8 L2271.0 752.2 L2272.5 751.5 L2274.0 752.5 L2275.5 752.9 L2277.0 749.8 L2278.5 751.3 L2280.0 754.8 L2281.5 747.2 L2283.0 752.9 L2284.5 750.3 L2286.0 750.1 L2287.5 751.6 L2289.0 748.9 L2290.5 754.1 L2292.0 753.3 L2293.5 752.1 L2295.0 749.2 L2296.5 749.4 L2298.0 748.1 L2299.5 751.7 L2301.0 750.6 L2302.5 751.1 L2304.0 745.1 L2305.5 750.4 L2307.0 751.4 L2308.5 748.2 L2310.0 752.6 L2311.5 749.4 L2313.0 752.7 L2314.5 751.3 L2316.0 752.0 L2317.5 750.3 L2319.0 755.5 L2320.5 751.9 L2322.0 751.0 L2323.5 750.4 L2325.0 753.9 L2326.5 747.3 L2328.0 751.7 L2329.5 752.6 L2331.0 750.7 L2332.5 750.8 L2334.0 750.3 L2335.5 752.7 L2337.0 750.6 L2338.5 752.1 L2340.0 750.4 L2341.5 752.9 L2343.0 749.9 L2344.5 750.9 L2346.0 750.0 L2347.5 752.3 L2349.0 752.6 L2350.5 752.8 L2352.0 750.8 L2353.5 744.3 L2355.0 752.0 L2356.5 753.6 L2358.0 751.8 L2359.5 750.3 L2361.0 750.6 L2362.5 751.1 L2364.0 752.6 L2365.5 752.5 L2367.0 749.4 L2368.5 752.7 L2370.0 747.6 L2371.5 752.0 L2373.0 751.6 L2374.5 752.6 L2376.0 752.4 L2377.5 757.6 L2379.0 755.9 L2380.5 757.1 L2382.0 752.5 L2383.5 751.8 L2385.0 752.6 L2386.5 753.8 L2388.0 747.9 L2389.5 754.2 L2391.0 753.3 L2392.5 754.4 L2394.0 751.8 L2395.5 752.1 L2397.0 752.1 L2398.5 751.7 L2400.0 754.2 L2401.5 753.7 L2403.0 753.5 L2404.5 755.4 L2406.0 754.1 L2407.5 752.7 L2409.0 751.0 L2410.5 754.6 L2412.0 753.7 L2413.5 753.1 L2415.0 756.1 L2416.5 755.1 L2418.0 755.4 L2419.5 754.1 L2421.0 755.9 L2422.5 757.6 L2424.0 753.1 L2425.5 753.1 L2427.0 755.5 L2428.5 755.5 L2430.0 748.8 L2431.5 752.8 L2433.0 753.9 L2434.5 752.5 L2436.0 750.5 L2437.5 752.3 L2439.0 751.7 L2440.5 755.1 L2442.0 753.5 L2443.5 751.7 L2445.0 750.2 L2446.5 750.7 L2448.0 751.2 L2449.5 752.5 L2451.0 749.7 L2452.5 750.0 L2454.0 747.5 L2455.5 754.1 L2457.0 754.3 L2458.5 752.2 L2460.0 749.2 L2461.5 748.5 L2463.0 753.2 L2464.5 746.9 L2466.0 752.7 L2467.5 761.0 L2469.0 752.6 L2470.5 751.8 L2472.0 751.5 L2473.5 749.9 L2475.0 752.0 L2476.5 750.9 L2478.0 753.6 L2479.5 753.4 L2481.0 753.2 L2482.5 755.2 L2484.0 755.0 L2485.5 755.4 L2487.0 751.0 L2488.5 755.0 L2490.0 753.4 L2491.5 752.7 L2493.0 754.6 L2494.5 755.3 L2496.0 759.3 L2497.5 754.1 L2499.0 754.4 L2500.5 753.7 L2502.0 754.4 L2503.5 754.4 L2505.0 756.7 L2506.5 755.1 L2508.0 752.1 L2509.5 753.7 L2511.0 756.1 L2512.5 752.8 L2514.0 753.7 L2515.5 754.1 L2517.0 755.8 L2518.5 755.3 L2520.0 752.6 L2521.5 759.3 L2523.0 754.6 L2524.5 756.9 L2526.0 752.7 L2527.5 754.8 L2529.0 755.5 L2530.5 757.4 L2532.0 752.9 L2533.5 753.7 L2535.0 755.1 L2536.5 761.0 L2538.0 754.7 L2539.5 757.2 L2541.0 754.4 L2542.5 753.4 L2544.0 754.0 L2545.5 754.4 L2547.0 753.0 L2548.5 752.8 L2550.0 755.6 L2551.5 753.0 L2553.0 754.9 L2554.5 755.3 L2556.0 754.6 L2557.5 754.3 L2559.0 753.7 L2560.5 750.6 L2562.0 751.6 L2563.5 748.2 L2565.0 750.5 L2566.5 750.4 L2568.0 752.0 L2569.5 750.5 L2571.0 749.7 L2572.5 752.1 L2574.0 753.6 L2575.5 750.9 L2577.0 752.1 L2578.5 752.4 L2580.0 751.7 L2581.5 747.5 L2583.0 747.6 L2584.5 751.9 L2586.0 751.6 L2587.5 751.0 L2589.0 746.5 L2590.5 750.6 L2592.0 752.0 L2593.5 750.7 L2595.0 750.3 L2596.5 749.1 L2598.0 748.9 L2599.5 748.2 L2601.0 745.3 L2602.5 750.6 L2604.0 749.5 L2605.5 750.3 L2607.0 751.7 L2608.5 751.1 L2610.0 752.8 L2611.5 758.5 L2613.0 749.6 L2614.5 745.5 L2616.0 749.6 L2617.5 749.8 L2619.0 748.6 L2620.5 750.7 L2622.0 750.6 L2623.5 749.5 L2625.0 748.9 L2626.5 746.7 L2628.0 749.5 L2629.5 749.3 L2631.0 751.0 L2632.5 751.7 L2634.0 753.0 L2635.5 752.7 L2637.0 751.4 L2638.5 750.7 L2640.0 748.4 L2641.5 748.5 L2643.0 748.4 L2644.5 750.6 L2646.0 750.1 L2647.5 751.2 L2649.0 751.3 L2650.5 753.2 L2652.0 753.8 L2653.5 752.2 L2655.0 751.0 L2656.5 749.9 L2658.0 752.5 L2659.5 752.7 L2661.0 753.1 L2662.5 753.4 L2664.0 747.7 L2665.5 749.8 L2667.0 750.0 L2668.5 753.6 L2670.0 750.8 L2671.5 749.9 L2673.0 752.1 L2674.5 746.0 L2676.0 749.7 L2677.5 753.3 L2679.0 755.0 L2680.5 751.3 L2682.0 750.5 L2683.5 754.0 L2685.0 750.1 L2686.5 751.7 L2688.0 753.6 L2689.5 750.2 L2691.0 752.4 L2692.5 750.0 L2694.0 752.1 L2695.5 753.7 L2697.0 750.2 L2698.5 751.8 L2700.0 751.0 L2701.5 749.1 L2703.0 753.8 L2704.5 752.0 L2706.0 749.7 L2707.5 753.4 L2709.0 752.1 L2710.5 751.5 L2712.0 751.6 L2713.5 750.9 L2715.0 751.8 L2716.5 750.4 L2718.0 750.2 L2719.5 749.4 L2721.0 749.0 L2722.5 751.6 L2724.0 751.4 L2725.5 752.4 L2727.0 751.9 L2728.5 747.3 L2730.0 752.5 L2731.5 753.7 L2733.0 748.5 L2734.5 750.7 L2736.0 752.8 L2737.5 752.4 L2739.0 758.9 L2740.5 753.8 L2742.0 752.9 L2743.5 752.6 L2745.0 751.3 L2746.5 754.6 L2748.0 754.1 L2749.5 753.6 L2751.0 752.8 L2752.5 753.7 L2754.0 750.4 L2755.5 748.7 L2757.0 753.3 L2758.5 752.4 L2760.0 752.7 L2761.5 754.7 L2763.0 754.5 L2764.5 753.0 L2766.0 753.2 L2767.5 755.8 L2769.0 755.2 L2770.5 754.3 L2772.0 753.8 L2773.5 752.5 L2775.0 754.6 L2776.5 754.1 L2778.0 756.9 L2779.5 754.1 L2781.0 755.2 L2782.5 754.3 L2784.0 750.1 L2785.5 751.2 L2787.0 750.9 L2788.5 752.4 L2790.0 753.4 L2791.5 751.2 L2793.0 748.4 L2794.5 751.7 L2796.0 754.4 L2797.5 752.1 L2799.0 750.8 L2800.5 752.3 L2802.0 750.7 L2803.5 751.3 L2805.0 753.2 L2806.5 752.9 L2808.0 750.5 L2809.5 750.6 L2811.0 755.2 L2812.5 751.6 L2814.0 754.0 L2815.5 751.7 L2817.0 753.4 L2818.5 755.1 L2820.0 755.4 L2821.5 749.1 L2823.0 754.3 L2824.5 760.6 L2826.0 757.2 L2827.5 758.5 L2829.0 753.6 L2830.5 754.9 L2832.0 755.7 L2833.5 758.1 L2835.0 755.3 L2836.5 756.9 L2838.0 755.9 L2839.5 750.7 L2841.0 757.1 L2842.5 753.8 L2844.0 753.9 L2845.5 755.4 L2847.0 754.0 L2848.5 756.8 L2850.0 755.7 L2851.5 755.1 L2853.0 754.4 L2854.5 755.0 L2856.0 759.8 L2857.5 754.1 L2859.0 754.4 L2860.5 756.0 L2862.0 756.4 L2863.5 754.0 L2865.0 753.5 L2866.5 754.4 L2868.0 750.8 L2869.5 754.8 L2871.0 752.5 L2872.5 754.7 L2874.0 754.5 L2875.5 753.7 L2877.0 754.2 L2878.5 753.2 L2880.0 753.6 L2881.5 759.3 L2883.0 750.1 L2884.5 750.4 L2886.0 751.3 L2887.5 754.7 L2889.0 753.9 L2890.5 753.3 L2892.0 744.4 L2893.5 752.8 L2895.0 752.9 L2896.5 752.3 L2898.0 753.2 L2899.5 754.6 L2901.0 755.5 L2902.5 756.6 L2904.0 755.1 L2905.5 755.0 L2907.0 752.8 L2908.5 753.0 L2910.0 757.9 L2911.5 751.6 L2913.0 752.1 L2914.5 750.2 L2916.0 752.4 L2917.5 751.5 L2919.0 751.8 L2920.5 752.2 L2922.0 751.7 L2923.5 750.3 L2925.0 752.5 L2926.5 749.4 L2928.0 756.0 L2929.5 753.8 L2931.0 754.2 L2932.5 753.5 L2934.0 755.3 L2935.5 755.4 L2937.0 753.6 L2938.5 753.1 L2940.0 752.8 L2941.5 752.4 L2943.0 754.0 L2944.5 752.3 L2946.0 751.6 L2947.5 753.4 L2949.0 752.0 L2950.5 752.2 L2952.0 751.8 L2953.5 751.0 L2955.0 754.0 L2956.5 754.3 L2958.0 754.8 L2959.5 750.8 L2961.0 750.7 L2962.5 751.4 L2964.0 752.6 L2965.5 746.1 L2967.0 751.5 L2968.5 752.1 L2970.0 751.5 L2971.5 754.1 L2973.0 754.7 L2974.5 752.4 L2976.0 751.7 L2977.5 753.8 L2979.0 751.2 L2980.5 752.6 L2982.0 751.3 L2983.5 752.2 L2985.0 751.6 L2986.5 753.0 L2988.0 759.9 L2989.5 753.7 L2991.0 754.5 L2992.5 752.6 L2994.0 755.4 L2995.5 750.7 L2997.0 751.6 L2998.5 749.8 L3000.0 745.7 L3001.5 753.0 L3003.0 750.1 L3004.5 754.5 L3006.0 753.6 L3007.5 754.1 L3009.0 753.1 L3010.5 752.9 L3012.0 753.1 L3013.5 752.4 L3015.0 754.7 L3016.5 751.6 L3018.0 751.6 L3019.5 752.5 L3021.0 753.7 L3022.5 754.5 L3024.0 753.0 L3025.5 754.4 L3027.0 753.2 L3028.5 750.1 L3030.0 752.0 L3031.5 751.7 L3033.0 745.3 L3034.5 750.9 L3036.0 753.6 L3037.5 751.8 L3039.0 752.4 L3040.5 752.8 L3042.0 751.8 L3043.5 751.0 L3045.0 753.3 L3046.5 747.5 L3048.0 751.7 L3049.5 753.4 L3051.0 753.2 L3052.5 751.8 L3054.0 750.2 L3055.5 750.7 L3057.0 751.2 L3058.5 751.4 L3060.0 752.4 L3061.5 751.7 L3063.0 754.2 L3064.5 753.0 L3066.0 754.4 L3067.5 751.8 L3069.0 751.6 L3070.5 752.7 L3072.0 755.0 L3073.5 754.2 L3075.0 755.3 L3076.5 756.0 L3078.0 752.0 L3079.5 746.8 L3081.0 753.2 L3082.5 750.1 L3084.0 753.5 L3085.5 750.3 L3087.0 754.6 L3088.5 752.0 L3090.0 750.9 L3091.5 753.1 L3093.0 759.3 L3094.5 754.0 L3096.0 753.8 L3097.5 751.0 L3099.0 754.3 L3100.5 752.8 L3102.0 754.3 L3103.5 752.0 L3105.0 752.6 L3106.5 753.2 L3108.0 753.5 L3109.5 755.4 L3111.0 754.2 L3112.5 755.4 L3114.0 754.3 L3115.5 752.9 L3117.0 755.6 L3118.5 754.4 L3120.0 748.3 L3121.5 752.2 L3123.0 751.7 L3124.5 750.1 L3126.0 752.2 L3127.5 750.4 L3129.0 751.3 L3130.5 752.4 L3132.0 752.7 L3133.5 753.9 L3135.0 751.9 L3136.5 754.6 L3138.0 758.7 L3139.5 753.4 L3139.5 779.7 L3138.0 778.5 L3136.5 781.3 L3135.0 779.6 L3133.5 776.9 L3132.0 771.0 L3130.5 781.3 L3129.0 774.3 L3127.5 779.4 L3126.0 779.1 L3124.5 780.4 L3123.0 778.3 L3121.5 778.0 L3120.0 777.1 L3118.5 778.6 L3117.0 781.6 L3115.5 780.3 L3114.0 780.9 L3112.5 782.4 L3111.0 780.4 L3109.5 778.2 L3108.0 779.4 L3106.5 780.3 L3105.0 783.3 L3103.5 780.7 L3102.0 782.8 L3100.5 781.6 L3099.0 779.7 L3097.5 782.9 L3096.0 780.3 L3094.5 781.1 L3093.0 780.2 L3091.5 781.7 L3090.0 779.6 L3088.5 779.0 L3087.0 780.8 L3085.5 778.6 L3084.0 779.1 L3082.5 782.8 L3081.0 783.4 L3079.5 781.7 L3078.0 783.8 L3076.5 783.1 L3075.0 778.9 L3073.5 783.5 L3072.0 784.0 L3070.5 782.3 L3069.0 781.7 L3067.5 783.4 L3066.0 780.5 L3064.5 778.7 L3063.0 780.5 L3061.5 779.5 L3060.0 781.4 L3058.5 782.2 L3057.0 778.7 L3055.5 780.9 L3054.0 780.6 L3052.5 781.9 L3051.0 779.5 L3049.5 784.1 L3048.0 780.1 L3046.5 783.5 L3045.0 780.0 L3043.5 779.8 L3042.0 779.0 L3040.5 779.0 L3039.0 780.4 L3037.5 779.8 L3036.0 782.6 L3034.5 784.7 L3033.0 781.6 L3031.5 782.7 L3030.0 779.1 L3028.5 779.5 L3027.0 778.4 L3025.5 778.1 L3024.0 776.7 L3022.5 786.5 L3021.0 779.0 L3019.5 779.7 L3018.0 782.0 L3016.5 783.2 L3015.0 780.8 L3013.5 779.6 L3012.0 778.6 L3010.5 780.4 L3009.0 781.3 L3007.5 779.1 L3006.0 780.9 L3004.5 779.5 L3003.0 779.8 L3001.5 779.3 L3000.0 778.7 L2998.5 778.0 L2997.0 777.8 L2995.5 780.7 L2994.0 779.1 L2992.5 777.1 L2991.0 779.1 L2989.5 777.9 L2988.0 782.6 L2986.5 778.8 L2985.0 779.0 L2983.5 778.0 L2982.0 776.8 L2980.5 777.3 L2979.0 774.4 L2977.5 775.8 L2976.0 777.3 L2974.5 777.3 L2973.0 776.6 L2971.5 774.0 L2970.0 783.3 L2968.5 778.9 L2967.0 776.5 L2965.5 772.8 L2964.0 774.1 L2962.5 779.3 L2961.0 784.3 L2959.5 776.1 L2958.0 779.1 L2956.5 776.2 L2955.0 779.1 L2953.5 778.6 L2952.0 779.8 L2950.5 778.7 L2949.0 781.0 L2947.5 772.2 L2946.0 784.4 L2944.5 781.7 L2943.0 778.4 L2941.5 777.0 L2940.0 777.1 L2938.5 776.6 L2937.0 779.5 L2935.5 778.5 L2934.0 780.7 L2932.5 778.8 L2931.0 779.5 L2929.5 778.2 L2928.0 779.3 L2926.5 777.0 L2925.0 781.9 L2923.5 787.9 L2922.0 780.5 L2920.5 780.7 L2919.0 782.6 L2917.5 781.9 L2916.0 778.9 L2914.5 779.7 L2913.0 779.6 L2911.5 780.9 L2910.0 785.9 L2908.5 778.6 L2907.0 777.1 L2905.5 776.2 L2904.0 777.5 L2902.5 779.1 L2901.0 779.3 L2899.5 778.6 L2898.0 778.6 L2896.5 784.8 L2895.0 779.5 L2893.5 779.8 L2892.0 779.0 L2890.5 776.5 L2889.0 777.7 L2887.5 778.4 L2886.0 775.9 L2884.5 780.2 L2883.0 777.6 L2881.5 776.4 L2880.0 778.0 L2878.5 777.8 L2877.0 778.6 L2875.5 779.1 L2874.0 778.1 L2872.5 775.3 L2871.0 780.3 L2869.5 777.7 L2868.0 776.6 L2866.5 779.2 L2865.0 776.9 L2863.5 775.9 L2862.0 778.5 L2860.5 778.6 L2859.0 776.4 L2857.5 774.8 L2856.0 777.0 L2854.5 776.2 L2853.0 777.0 L2851.5 779.0 L2850.0 776.9 L2848.5 779.8 L2847.0 779.9 L2845.5 771.8 L2844.0 780.3 L2842.5 773.8 L2841.0 780.4 L2839.5 776.8 L2838.0 777.7 L2836.5 778.9 L2835.0 776.9 L2833.5 777.4 L2832.0 778.3 L2830.5 775.6 L2829.0 776.5 L2827.5 776.6 L2826.0 777.0 L2824.5 777.8 L2823.0 776.8 L2821.5 777.6 L2820.0 784.9 L2818.5 779.1 L2817.0 779.1 L2815.5 778.2 L2814.0 784.6 L2812.5 777.9 L2811.0 776.5 L2809.5 776.2 L2808.0 779.4 L2806.5 778.8 L2805.0 782.5 L2803.5 778.9 L2802.0 781.9 L2800.5 778.6 L2799.0 777.6 L2797.5 778.3 L2796.0 776.8 L2794.5 772.8 L2793.0 780.3 L2791.5 778.9 L2790.0 778.9 L2788.5 776.7 L2787.0 779.6 L2785.5 777.2 L2784.0 777.8 L2782.5 779.4 L2781.0 778.0 L2779.5 780.1 L2778.0 779.7 L2776.5 778.1 L2775.0 781.2 L2773.5 774.2 L2772.0 780.9 L2770.5 779.4 L2769.0 781.9 L2767.5 782.2 L2766.0 779.8 L2764.5 777.9 L2763.0 777.0 L2761.5 779.7 L2760.0 783.6 L2758.5 784.1 L2757.0 780.3 L2755.5 778.9 L2754.0 781.0 L2752.5 776.3 L2751.0 782.3 L2749.5 779.9 L2748.0 780.9 L2746.5 782.1 L2745.0 786.2 L2743.5 779.8 L2742.0 781.4 L2740.5 779.8 L2739.0 779.9 L2737.5 776.8 L2736.0 779.9 L2734.5 777.8 L2733.0 778.0 L2731.5 777.8 L2730.0 777.4 L2728.5 777.8 L2727.0 778.1 L2725.5 777.9 L2724.0 778.3 L2722.5 780.2 L2721.0 783.9 L2719.5 778.4 L2718.0 777.9 L2716.5 781.8 L2715.0 786.0 L2713.5 786.0 L2712.0 778.8 L2710.5 778.3 L2709.0 778.0 L2707.5 779.4 L2706.0 780.2 L2704.5 778.6 L2703.0 781.6 L2701.5 782.4 L2700.0 780.7 L2698.5 784.4 L2697.0 776.1 L2695.5 779.1 L2694.0 781.2 L2692.5 777.1 L2691.0 778.9 L2689.5 781.8 L2688.0 779.3 L2686.5 780.0 L2685.0 779.9 L2683.5 779.8 L2682.0 778.7 L2680.5 780.2 L2679.0 778.8 L2677.5 780.7 L2676.0 781.8 L2674.5 781.2 L2673.0 781.9 L2671.5 787.1 L2670.0 781.2 L2668.5 780.2 L2667.0 784.0 L2665.5 782.2 L2664.0 781.2 L2662.5 778.9 L2661.0 777.9 L2659.5 782.8 L2658.0 781.1 L2656.5 784.9 L2655.0 775.6 L2653.5 781.0 L2652.0 782.8 L2650.5 781.4 L2649.0 781.0 L2647.5 781.2 L2646.0 781.7 L2644.5 779.1 L2643.0 781.7 L2641.5 780.8 L2640.0 781.0 L2638.5 781.4 L2637.0 783.1 L2635.5 781.7 L2634.0 781.6 L2632.5 777.7 L2631.0 779.2 L2629.5 782.8 L2628.0 779.0 L2626.5 780.2 L2625.0 786.4 L2623.5 781.0 L2622.0 780.2 L2620.5 780.9 L2619.0 781.1 L2617.5 780.4 L2616.0 781.7 L2614.5 779.5 L2613.0 783.4 L2611.5 778.8 L2610.0 784.8 L2608.5 778.9 L2607.0 775.9 L2605.5 781.8 L2604.0 781.3 L2602.5 781.4 L2601.0 781.1 L2599.5 779.6 L2598.0 781.2 L2596.5 780.8 L2595.0 778.5 L2593.5 780.2 L2592.0 782.8 L2590.5 778.6 L2589.0 780.6 L2587.5 784.8 L2586.0 779.7 L2584.5 780.1 L2583.0 783.1 L2581.5 783.7 L2580.0 781.4 L2578.5 781.2 L2577.0 783.0 L2575.5 779.5 L2574.0 778.8 L2572.5 779.5 L2571.0 777.5 L2569.5 778.8 L2568.0 778.4 L2566.5 779.2 L2565.0 779.6 L2563.5 779.6 L2562.0 779.7 L2560.5 781.4 L2559.0 779.9 L2557.5 781.2 L2556.0 781.5 L2554.5 781.9 L2553.0 782.4 L2551.5 780.4 L2550.0 780.1 L2548.5 779.2 L2547.0 771.4 L2545.5 777.9 L2544.0 772.2 L2542.5 784.7 L2541.0 777.4 L2539.5 781.7 L2538.0 775.2 L2536.5 778.5 L2535.0 776.8 L2533.5 780.1 L2532.0 786.0 L2530.5 781.2 L2529.0 777.6 L2527.5 778.9 L2526.0 778.5 L2524.5 777.7 L2523.0 776.8 L2521.5 780.0 L2520.0 776.2 L2518.5 777.2 L2517.0 779.9 L2515.5 781.6 L2514.0 774.5 L2512.5 778.6 L2511.0 777.6 L2509.5 777.9 L2508.0 779.2 L2506.5 778.1 L2505.0 777.3 L2503.5 777.6 L2502.0 777.2 L2500.5 785.3 L2499.0 779.4 L2497.5 776.9 L2496.0 779.6 L2494.5 781.5 L2493.0 774.2 L2491.5 779.6 L2490.0 779.0 L2488.5 789.6 L2487.0 782.0 L2485.5 782.8 L2484.0 778.8 L2482.5 778.9 L2481.0 778.5 L2479.5 776.5 L2478.0 779.4 L2476.5 778.0 L2475.0 780.1 L2473.5 780.0 L2472.0 778.8 L2470.5 774.6 L2469.0 776.2 L2467.5 777.2 L2466.0 778.3 L2464.5 781.1 L2463.0 777.6 L2461.5 778.4 L2460.0 778.5 L2458.5 777.5 L2457.0 779.2 L2455.5 777.6 L2454.0 779.0 L2452.5 777.2 L2451.0 778.6 L2449.5 776.4 L2448.0 779.5 L2446.5 777.5 L2445.0 780.0 L2443.5 778.5 L2442.0 778.0 L2440.5 779.0 L2439.0 780.6 L2437.5 778.9 L2436.0 777.5 L2434.5 777.7 L2433.0 780.1 L2431.5 777.6 L2430.0 780.5 L2428.5 776.4 L2427.0 776.2 L2425.5 781.8 L2424.0 774.8 L2422.5 774.6 L2421.0 772.6 L2419.5 771.0 L2418.0 773.5 L2416.5 775.3 L2415.0 775.8 L2413.5 775.7 L2412.0 773.6 L2410.5 774.5 L2409.0 774.7 L2407.5 776.0 L2406.0 777.4 L2404.5 779.2 L2403.0 777.6 L2401.5 778.0 L2400.0 775.7 L2398.5 784.2 L2397.0 785.5 L2395.5 774.6 L2394.0 773.5 L2392.5 776.9 L2391.0 775.5 L2389.5 777.8 L2388.0 775.9 L2386.5 777.1 L2385.0 779.5 L2383.5 779.2 L2382.0 779.1 L2380.5 779.9 L2379.0 781.0 L2377.5 787.5 L2376.0 778.3 L2374.5 771.8 L2373.0 775.3 L2371.5 777.7 L2370.0 782.4 L2368.5 779.5 L2367.0 775.8 L2365.5 775.7 L2364.0 775.7 L2362.5 776.7 L2361.0 777.5 L2359.5 777.0 L2358.0 780.5 L2356.5 776.9 L2355.0 776.6 L2353.5 782.3 L2352.0 782.8 L2350.5 780.3 L2349.0 779.7 L2347.5 780.4 L2346.0 779.3 L2344.5 778.3 L2343.0 773.0 L2341.5 777.3 L2340.0 779.4 L2338.5 778.0 L2337.0 781.5 L2335.5 779.2 L2334.0 780.8 L2332.5 780.1 L2331.0 780.6 L2329.5 782.9 L2328.0 782.1 L2326.5 782.7 L2325.0 780.5 L2323.5 777.9 L2322.0 781.1 L2320.5 778.3 L2319.0 780.0 L2317.5 784.2 L2316.0 778.8 L2314.5 781.2 L2313.0 777.9 L2311.5 778.7 L2310.0 779.9 L2308.5 777.6 L2307.0 778.3 L2305.5 780.8 L2304.0 789.6 L2302.5 781.0 L2301.0 779.6 L2299.5 778.5 L2298.0 778.2 L2296.5 776.9 L2295.0 778.6 L2293.5 778.7 L2292.0 778.9 L2290.5 780.5 L2289.0 778.9 L2287.5 779.2 L2286.0 778.5 L2284.5 779.2 L2283.0 777.4 L2281.5 778.9 L2280.0 779.3 L2278.5 776.9 L2277.0 780.5 L2275.5 777.9 L2274.0 780.1 L2272.5 781.3 L2271.0 780.1 L2269.5 780.8 L2268.0 776.5 L2266.5 778.0 L2265.0 780.3 L2263.5 780.0 L2262.0 778.9 L2260.5 778.3 L2259.0 779.6 L2257.5 780.9 L2256.0 779.3 L2254.5 772.8 L2253.0 778.5 L2251.5 778.6 L2250.0 778.9 L2248.5 779.4 L2247.0 777.7 L2245.5 782.0 L2244.0 781.6 L2242.5 773.7 L2241.0 780.6 L2239.5 780.7 L2238.0 780.9 L2236.5 781.5 L2235.0 783.2 L2233.5 781.6 L2232.0 781.2 L2230.5 779.5 L2229.0 779.7 L2227.5 779.6 L2226.0 777.8 L2224.5 778.3 L2223.0 778.8 L2221.5 777.3 L2220.0 780.0 L2218.5 777.0 L2217.0 776.8 L2215.5 779.3 L2214.0 780.6 L2212.5 777.6 L2211.0 779.6 L2209.5 781.9 L2208.0 779.5 L2206.5 778.1 L2205.0 779.2 L2203.5 778.7 L2202.0 780.6 L2200.5 781.7 L2199.0 779.6 L2197.5 776.9 L2196.0 778.8 L2194.5 778.5 L2193.0 771.9 L2191.5 771.4 L2190.0 778.9 L2188.5 782.8 L2187.0 779.7 L2185.5 781.7 L2184.0 776.8 L2182.5 777.7 L2181.0 779.7 L2179.5 781.1 L2178.0 778.7 L2176.5 781.8 L2175.0 779.4 L2173.5 780.5 L2172.0 780.2 L2170.5 780.6 L2169.0 778.3 L2167.5 780.7 L2166.0 775.4 L2164.5 786.0 L2163.0 777.8 L2161.5 779.9 L2160.0 780.2 L2158.5 784.6 L2157.0 775.9 L2155.5 782.9 L2154.0 779.8 L2152.5 778.3 L2151.0 778.6 L2149.5 780.5 L2148.0 777.9 L2146.5 779.1 L2145.0 778.6 L2143.5 780.5 L2142.0 773.1 L2140.5 778.8 L2139.0 778.0 L2137.5 777.9 L2136.0 777.8 L2134.5 778.5 L2133.0 777.2 L2131.5 780.1 L2130.0 778.2 L2128.5 776.6 L2127.0 779.3 L2125.5 778.0 L2124.0 775.2 L2122.5 776.2 L2121.0 777.4 L2119.5 777.2 L2118.0 775.0 L2116.5 777.4 L2115.0 774.5 L2113.5 774.7 L2112.0 777.0 L2110.5 775.0 L2109.0 780.0 L2107.5 779.8 L2106.0 780.5 L2104.5 776.0 L2103.0 777.3 L2101.5 774.1 L2100.0 779.2 L2098.5 774.7 L2097.0 773.8 L2095.5 773.8 L2094.0 776.5 L2092.5 773.8 L2091.0 777.7 L2089.5 775.5 L2088.0 777.4 L2086.5 779.9 L2085.0 780.0 L2083.5 777.3 L2082.0 778.0 L2080.5 780.8 L2079.0 778.6 L2077.5 778.7 L2076.0 778.3 L2074.5 777.1 L2073.0 777.4 L2071.5 779.4 L2070.0 779.2 L2068.5 779.2 L2067.0 779.4 L2065.5 781.9 L2064.0 779.0 L2062.5 778.7 L2061.0 779.0 L2059.5 777.3 L2058.0 779.3 L2056.5 781.0 L2055.0 781.1 L2053.5 782.0 L2052.0 784.7 L2050.5 786.9 L2049.0 781.4 L2047.5 781.9 L2046.0 778.6 L2044.5 780.4 L2043.0 781.2 L2041.5 778.0 L2040.0 778.1 L2038.5 780.7 L2037.0 779.5 L2035.5 779.4 L2034.0 780.1 L2032.5 781.0 L2031.0 781.5 L2029.5 780.1 L2028.0 778.7 L2026.5 780.8 L2025.0 780.9 L2023.5 780.3 L2022.0 781.7 L2020.5 788.2 L2019.0 780.7 L2017.5 777.9 L2016.0 781.6 L2014.5 781.1 L2013.0 778.2 L2011.5 781.3 L2010.0 780.4 L2008.5 778.9 L2007.0 778.7 L2005.5 782.0 L2004.0 780.7 L2002.5 779.8 L2001.0 779.9 L1999.5 773.6 L1998.0 781.9 L1996.5 780.0 L1995.0 779.2 L1993.5 777.2 L1992.0 778.9 L1990.5 776.2 L1989.0 771.0 L1987.5 777.6 L1986.0 786.1 L1984.5 776.2 L1983.0 777.7 L1981.5 779.9 L1980.0 773.3 L1978.5 777.8 L1977.0 778.4 L1975.5 780.9 L1974.0 778.7 L1972.5 778.4 L1971.0 778.5 L1969.5 777.1 L1968.0 777.5 L1966.5 777.5 L1965.0 781.4 L1963.5 779.1 L1962.0 780.3 L1960.5 779.4 L1959.0 780.2 L1957.5 780.9 L1956.0 778.1 L1954.5 781.1 L1953.0 781.1 L1951.5 779.8 L1950.0 779.6 L1948.5 781.2 L1947.0 780.2 L1945.5 779.4 L1944.0 778.3 L1942.5 780.2 L1941.0 778.4 L1939.5 780.2 L1938.0 780.3 L1936.5 779.6 L1935.0 778.3 L1933.5 779.2 L1932.0 777.3 L1930.5 780.6 L1929.0 781.7 L1927.5 782.0 L1926.0 778.0 L1924.5 780.3 L1923.0 780.0 L1921.5 779.4 L1920.0 779.3 L1918.5 782.7 L1917.0 780.5 L1915.5 785.4 L1914.0 781.2 L1912.5 781.9 L1911.0 779.0 L1909.5 787.8 L1908.0 778.2 L1906.5 786.0 L1905.0 782.6 L1903.5 782.3 L1902.0 783.9 L1900.5 782.6 L1899.0 778.2 L1897.5 781.5 L1896.0 780.4 L1894.5 782.0 L1893.0 780.0 L1891.5 782.3 L1890.0 774.7 L1888.5 788.7 L1887.0 781.5 L1885.5 783.7 L1884.0 783.5 L1882.5 781.6 L1881.0 779.8 L1879.5 780.4 L1878.0 780.1 L1876.5 781.7 L1875.0 781.0 L1873.5 782.7 L1872.0 783.0 L1870.5 777.9 L1869.0 779.3 L1867.5 778.1 L1866.0 781.5 L1864.5 779.8 L1863.0 782.9 L1861.5 783.0 L1860.0 783.1 L1858.5 784.0 L1857.0 785.8 L1855.5 781.9 L1854.0 782.6 L1852.5 782.3 L1851.0 781.2 L1849.5 776.8 L1848.0 779.0 L1846.5 780.8 L1845.0 779.7 L1843.5 780.7 L1842.0 780.4 L1840.5 779.4 L1839.0 781.9 L1837.5 781.7 L1836.0 782.9 L1834.5 780.7 L1833.0 782.0 L1831.5 781.0 L1830.0 781.9 L1828.5 780.9 L1827.0 782.3 L1825.5 781.5 L1824.0 780.4 L1822.5 780.3 L1821.0 775.3 L1819.5 775.1 L1818.0 777.5 L1816.5 778.5 L1815.0 775.0 L1813.5 779.3 L1812.0 778.8 L1810.5 779.3 L1809.0 780.9 L1807.5 776.0 L1806.0 777.8 L1804.5 776.1 L1803.0 776.5 L1801.5 778.0 L1800.0 775.9 L1798.5 777.4 L1797.0 778.5 L1795.5 781.5 L1794.0 782.0 L1792.5 780.0 L1791.0 780.5 L1789.5 782.3 L1788.0 779.2 L1786.5 777.6 L1785.0 779.2 L1783.5 777.4 L1782.0 787.6 L1780.5 779.4 L1779.0 778.8 L1777.5 779.7 L1776.0 779.3 L1774.5 780.1 L1773.0 779.8 L1771.5 777.5 L1770.0 774.5 L1768.5 778.5 L1767.0 781.1 L1765.5 781.6 L1764.0 777.6 L1762.5 779.9 L1761.0 777.5 L1759.5 778.9 L1758.0 776.4 L1756.5 777.5 L1755.0 778.8 L1753.5 781.5 L1752.0 782.0 L1750.5 780.7 L1749.0 780.3 L1747.5 780.8 L1746.0 783.1 L1744.5 778.8 L1743.0 777.1 L1741.5 780.6 L1740.0 779.8 L1738.5 780.7 L1737.0 778.7 L1735.5 781.2 L1734.0 780.4 L1732.5 777.5 L1731.0 777.2 L1729.5 782.9 L1728.0 779.0 L1726.5 776.4 L1725.0 774.3 L1723.5 777.2 L1722.0 777.7 L1720.5 777.3 L1719.0 776.2 L1717.5 778.5 L1716.0 777.4 L1714.5 779.6 L1713.0 776.2 L1711.5 775.3 L1710.0 778.2 L1708.5 778.1 L1707.0 778.2 L1705.5 777.2 L1704.0 775.5 L1702.5 776.8 L1701.0 775.1 L1699.5 775.3 L1698.0 775.3 L1696.5 776.4 L1695.0 775.4 L1693.5 777.4 L1692.0 777.2 L1690.5 774.5 L1689.0 785.3 L1687.5 778.4 L1686.0 777.7 L1684.5 776.0 L1683.0 777.6 L1681.5 774.2 L1680.0 776.2 L1678.5 777.9 L1677.0 775.5 L1675.5 780.4 L1674.0 779.2 L1672.5 776.3 L1671.0 777.1 L1669.5 773.3 L1668.0 776.0 L1666.5 777.8 L1665.0 779.4 L1663.5 779.7 L1662.0 778.6 L1660.5 780.0 L1659.0 779.9 L1657.5 777.0 L1656.0 776.7 L1654.5 775.5 L1653.0 778.8 L1651.5 778.0 L1650.0 776.2 L1648.5 778.1 L1647.0 779.7 L1645.5 776.2 L1644.0 778.4 L1642.5 778.6 L1641.0 780.0 L1639.5 779.3 L1638.0 779.2 L1636.5 781.0 L1635.0 780.0 L1633.5 784.8 L1632.0 778.5 L1630.5 779.4 L1629.0 780.4 L1627.5 779.1 L1626.0 779.9 L1624.5 779.0 L1623.0 778.8 L1621.5 778.1 L1620.0 772.3 L1618.5 780.4 L1617.0 780.2 L1615.5 783.8 L1614.0 788.1 L1612.5 789.9 L1611.0 789.5 L1609.5 787.0 L1608.0 781.6 L1606.5 766.8 L1605.0 767.1 L1603.5 766.8 L1602.0 767.2 L1600.5 767.4 L1599.0 767.6 L1597.5 767.5 L1596.0 767.5 L1594.5 767.3 L1593.0 767.4 L1591.5 767.5 L1590.0 767.4 L1588.5 767.4 L1587.0 768.1 L1585.5 767.8 L1584.0 768.6 L1582.5 768.5 L1581.0 768.4 L1579.5 769.2 L1578.0 769.4 L1576.5 769.0 L1575.0 768.3 L1573.5 768.2 L1572.0 769.2 L1570.5 769.0 L1569.0 768.9 L1567.5 768.7 L1566.0 769.3 L1564.5 768.9 L1563.0 769.7 L1561.5 769.5 L1560.0 769.4 L1558.5 770.6 L1557.0 770.9 L1555.5 771.0 L1554.0 770.4 L1552.5 770.2 L1551.0 771.4 L1549.5 770.4 L1548.0 770.0 L1546.5 769.8 L1545.0 771.8 L1543.5 770.3 L1542.0 770.8 L1540.5 772.4 L1539.0 773.2 L1537.5 772.5 L1536.0 771.6 L1534.5 772.9 L1533.0 773.6 L1531.5 771.5 L1530.0 772.7 L1528.5 774.1 L1527.0 772.0 L1525.5 771.3 L1524.0 771.9 L1522.5 774.2 L1521.0 771.6 L1519.5 775.4 L1518.0 772.4 L1516.5 774.2 L1515.0 774.0 L1513.5 775.0 L1512.0 773.4 L1510.5 773.3 L1509.0 772.9 L1507.5 773.8 L1506.0 774.8 L1504.5 777.1 L1503.0 774.9 L1501.5 777.2 L1500.0 777.2 L1498.5 777.8 L1497.0 775.9 L1495.5 777.0 L1494.0 774.1 L1492.5 778.9 L1491.0 778.0 L1489.5 778.8 L1488.0 778.4 L1486.5 774.8 L1485.0 779.9 L1483.5 774.8 L1482.0 774.2 L1480.5 777.7 L1479.0 780.0 L1477.5 776.5 L1476.0 774.7 L1474.5 776.4 L1473.0 778.4 L1471.5 781.7 L1470.0 777.7 L1468.5 776.2 L1467.0 779.5 L1465.5 777.5 L1464.0 780.8 L1462.5 776.2 L1461.0 782.8 L1459.5 778.7 L1458.0 788.7 L1456.5 793.5 L1455.0 795.0 L1453.5 793.5 L1452.0 788.7 L1450.5 778.7 L1449.0 767.0 L1447.5 767.0 L1446.0 767.0 L1444.5 767.0 L1443.0 767.0 L1441.5 767.0 L1440.0 767.0 L1438.5 767.0 L1437.0 767.0 L1435.5 767.0 L1434.0 767.0 L1432.5 767.0 L1431.0 767.0 L1429.5 767.0 L1428.0 767.0 L1426.5 767.0 L1425.0 767.0 L1423.5 767.0 L1422.0 767.0 L1420.5 767.0 L1419.0 767.0 L1417.5 767.0 L1416.0 767.0 L1414.5 767.0 L1413.0 767.0 L1411.5 767.0 L1410.0 767.0 L1408.5 767.0 L1407.0 767.0 L1405.5 767.0 L1404.0 767.0 L1402.5 767.0 L1401.0 767.0 L1399.5 767.0 L1398.0 767.0 L1396.5 767.0 L1395.0 767.0 L1393.5 767.0 L1392.0 767.0 L1390.5 767.0 L1389.0 767.0 L1387.5 767.0 L1386.0 767.0 L1384.5 767.0 L1383.0 767.0 L1381.5 767.0 L1380.0 767.0 L1378.5 767.0 L1377.0 767.0 L1375.5 767.0 L1374.0 767.0 L1372.5 767.0 L1371.0 767.0 L1369.5 767.0 L1368.0 767.0 L1366.5 767.0 L1365.0 767.0 L1363.5 767.0 L1362.0 767.0 L1360.5 767.0 L1359.0 767.0 L1357.5 767.0 L1356.0 767.0 L1354.5 767.0 L1353.0 767.0 L1351.5 767.0 L1350.0 767.0 L1348.5 767.0 L1347.0 767.0 L1345.5 767.0 L1344.0 767.0 L1342.5 767.0 L1341.0 767.0 L1339.5 767.0 L1338.0 767.0 L1336.5 767.0 L1335.0 767.0 L1333.5 767.0 L1332.0 767.0 L1330.5 767.0 L1329.0 767.0 L1327.5 767.0 L1326.0 767.0 Z"/></g></svg>
<div class="b" style="left:1320px;top:672px;width:6px;height:126px;background:#8c8c8c;border-radius:5px 0 0 5px;"></div>
<span class="t" style="left:1336.73px;top:770.00px;font-size:22.53px;font-weight:400;color:#f2f2f2;font-family:'Liberation Sans', sans-serif;transform-origin:0 0;transform:scaleX(0.9244);text-shadow:0 1px 3px rgba(0,0,0,.9);">BASE</span>
<div class="b" style="left:658px;top:1026px;width:2480px;height:2px;background:#333;"></div>
<div class="b" style="left:658px;top:808px;width:4px;height:218px;background:#7b5cf6;"></div>
<span class="t" style="left:678.56px;top:822.00px;font-size:22.24px;letter-spacing:0.293px;font-weight:400;color:#a9a9a9;font-family:'Liberation Sans', sans-serif;">TEMPO MIDI</span>
<div class="b" style="left:662px;top:852px;width:114px;height:42px;border:2px solid #7757ee;border-radius:21px;background:#33265f;"></div>
<span class="t" style="left:678.72px;top:863.00px;font-size:23.55px;letter-spacing:0.533px;font-weight:400;color:#f0f0f0;font-family:'Liberation Sans', sans-serif;text-shadow:0 1px 2px rgba(0,0,0,.7);">PC 113</span>
<div class="b" style="left:822px;top:852px;width:116px;height:42px;border:2px solid #7757ee;border-radius:21px;background:#33265f;"></div>
<span class="t" style="left:839.42px;top:863.00px;font-size:23.55px;letter-spacing:1.474px;font-weight:400;color:#f0f0f0;font-family:'Liberation Sans', sans-serif;text-shadow:0 1px 2px rgba(0,0,0,.7);">CC 0:0</span>
<div class="b" style="left:662px;top:896px;width:148px;height:42px;border:2px solid #7757ee;border-radius:21px;background:#33265f;"></div>
<span class="t" style="left:679.42px;top:907.00px;font-size:23.55px;letter-spacing:1.908px;font-weight:400;color:#f0f0f0;font-family:'Liberation Sans', sans-serif;text-shadow:0 1px 2px rgba(0,0,0,.7);">CC 69:69</span>
<div class="b" style="left:822px;top:896px;width:131px;height:42px;border:2px solid #7757ee;border-radius:21px;background:#33265f;"></div>
<span class="t" style="left:839.42px;top:907.00px;font-size:23.55px;letter-spacing:1.551px;font-weight:400;color:#f0f0f0;font-family:'Liberation Sans', sans-serif;text-shadow:0 1px 2px rgba(0,0,0,.7);">CC 32:0</span>
<div class="b" style="left:662px;top:940px;width:116px;height:42px;border:2px solid #7757ee;border-radius:21px;background:#33265f;"></div>
<span class="t" style="left:678.72px;top:951.00px;font-size:23.55px;letter-spacing:0.603px;font-weight:400;color:#f0f0f0;font-family:'Liberation Sans', sans-serif;text-shadow:0 1px 2px rgba(0,0,0,.7);">PC 107</span>
<div class="b" style="left:822px;top:940px;width:116px;height:42px;border:2px solid #7757ee;border-radius:21px;background:#33265f;"></div>
<span class="t" style="left:839.42px;top:951.00px;font-size:23.55px;letter-spacing:1.474px;font-weight:400;color:#f0f0f0;font-family:'Liberation Sans', sans-serif;text-shadow:0 1px 2px rgba(0,0,0,.7);">CC 0:0</span>
<div class="b" style="left:662px;top:984px;width:148px;height:42px;border:2px solid #7757ee;border-radius:21px;background:#33265f;"></div>
<span class="t" style="left:679.42px;top:995.00px;font-size:23.55px;letter-spacing:1.908px;font-weight:400;color:#f0f0f0;font-family:'Liberation Sans', sans-serif;text-shadow:0 1px 2px rgba(0,0,0,.7);">CC 69:69</span>
<div class="b" style="left:822px;top:984px;width:131px;height:42px;border:2px solid #7757ee;border-radius:21px;background:#33265f;"></div>
<span class="t" style="left:839.42px;top:995.00px;font-size:23.55px;letter-spacing:1.551px;font-weight:400;color:#f0f0f0;font-family:'Liberation Sans', sans-serif;text-shadow:0 1px 2px rgba(0,0,0,.7);">CC 32:0</span>
<div class="b" style="left:816px;top:352px;width:2px;height:1468px;background:rgba(255,255,255,.058);"></div>
<div class="b" style="left:976px;top:352px;width:2px;height:1468px;background:rgba(255,255,255,.058);"></div>
<div class="b" style="left:1136px;top:328px;width:2px;height:1492px;background:rgba(255,255,255,.145);"></div>
<div class="b" style="left:1296px;top:352px;width:2px;height:1468px;background:rgba(255,255,255,.058);"></div>
<div class="b" style="left:1456px;top:352px;width:2px;height:1468px;background:rgba(255,255,255,.058);"></div>
<div class="b" style="left:1616px;top:328px;width:2px;height:1492px;background:rgba(255,255,255,.145);"></div>
<div class="b" style="left:1776px;top:352px;width:2px;height:1468px;background:rgba(255,255,255,.058);"></div>
<div class="b" style="left:1936px;top:352px;width:2px;height:1468px;background:rgba(255,255,255,.058);"></div>
<div class="b" style="left:2096px;top:328px;width:2px;height:1492px;background:rgba(255,255,255,.145);"></div>
<div class="b" style="left:2256px;top:352px;width:2px;height:1468px;background:rgba(255,255,255,.058);"></div>
<div class="b" style="left:2416px;top:352px;width:2px;height:1468px;background:rgba(255,255,255,.058);"></div>
<div class="b" style="left:2576px;top:328px;width:2px;height:1492px;background:rgba(255,255,255,.145);"></div>
<div class="b" style="left:2736px;top:352px;width:2px;height:1468px;background:rgba(255,255,255,.058);"></div>
<div class="b" style="left:2896px;top:352px;width:2px;height:1468px;background:rgba(255,255,255,.058);"></div>
<div class="b" style="left:3056px;top:328px;width:2px;height:1492px;background:rgba(255,255,255,.145);"></div>
<span class="t" style="left:662.91px;top:336.00px;font-size:22.53px;letter-spacing:0.000px;font-weight:400;color:#b9b9b9;font-family:'Liberation Sans', sans-serif;">1</span>
<span class="t" style="left:1143.47px;top:336.00px;font-size:22.53px;letter-spacing:0.000px;font-weight:400;color:#b9b9b9;font-family:'Liberation Sans', sans-serif;">2</span>
<span class="t" style="left:1623.81px;top:336.00px;font-size:22.53px;letter-spacing:0.000px;font-weight:400;color:#b9b9b9;font-family:'Liberation Sans', sans-serif;">3</span>
<span class="t" style="left:2104.15px;top:336.00px;font-size:22.53px;letter-spacing:0.000px;font-weight:400;color:#b9b9b9;font-family:'Liberation Sans', sans-serif;">4</span>
<span class="t" style="left:2583.70px;top:336.00px;font-size:22.53px;letter-spacing:0.000px;font-weight:400;color:#b9b9b9;font-family:'Liberation Sans', sans-serif;">5</span>
<span class="t" style="left:3063.47px;top:336.00px;font-size:22.53px;letter-spacing:0.000px;font-weight:400;color:#b9b9b9;font-family:'Liberation Sans', sans-serif;">6</span>
<div class="b" style="left:818px;top:816px;width:4px;height:34px;background:#121212;"></div>
<div class="b" style="left:656px;top:328px;width:2px;height:1492px;background:#6fdaa6;"></div>
<span class="t" style="left:131.42px;top:270.00px;font-size:19.62px;letter-spacing:0.901px;font-weight:400;color:#a9a9a9;font-family:'Liberation Sans', sans-serif;-webkit-text-stroke:.55px #a9a9a9;">SETLIST</span>
<div class="b" style="left:128px;top:296px;width:510px;height:57px;border:2px solid #333;border-radius:14px;background:#111;"></div>
<svg class="b" style="left:146px;top:312px;" width="28" height="28" viewBox="0 0 24 24" fill="none" stroke="#65cf9d" stroke-width="2" stroke-linecap="round" stroke-linejoin="round"><path d="M15 2H6a2 2 0 0 0-2 2v16a2 2 0 0 0 2 2h12a2 2 0 0 0 2-2V7Z"/><path d="M14 2v4a2 2 0 0 0 2 2h4"/><path d="M16 13H8"/><path d="M16 17H8"/></svg>
<span class="t" style="left:185.00px;top:314.00px;font-size:25.00px;letter-spacing:0.534px;font-weight:400;color:#f2f2f2;font-family:'Liberation Sans', sans-serif;-webkit-text-stroke:.8px #f2f2f2;">Rehersals</span>
<svg class="b" style="left:597px;top:315.1px;" width="22" height="22" viewBox="0 0 24 24" fill="none" stroke="#c4c4c4" stroke-width="3.1" stroke-linecap="round" stroke-linejoin="round"><path d="m6 9 6 6 6-6"/></svg>
<div class="b" style="left:128px;top:374px;width:446px;height:56px;border:2px solid #333;border-radius:14px;background:#111;"></div>
<span class="t" style="left:144.85px;top:391.00px;font-size:24.42px;letter-spacing:0.570px;font-weight:400;color:#8f8f8f;font-family:'Liberation Sans', sans-serif;">New song...</span>
<div class="b" style="left:582px;top:374px;width:56px;height:56px;background:#3f7560;border-radius:13px;"></div>
<svg class="b" style="left:596px;top:388px;" width="28" height="28" viewBox="0 0 24 24" fill="none" stroke="#141414" stroke-width="2.2" stroke-linecap="round" stroke-linejoin="round"><path d="M5 12h14"/><path d="M12 5v14"/></svg>
<div class="b" style="left:120px;top:446px;width:526px;height:86px;background:#111;border-radius:12px;"></div>
<span class="t" style="left:146.21px;top:478.00px;font-size:21.22px;letter-spacing:0.000px;font-weight:400;color:#a9a9a9;font-family:'Liberation Sans', sans-serif;">1</span>
<span class="t" style="left:178.81px;top:466.00px;font-size:24.85px;letter-spacing:0.856px;font-weight:400;color:#f2f2f2;font-family:'Liberation Sans', sans-serif;">Born with a broken heart</span>
<span class="t" style="left:179.36px;top:496.00px;font-size:19.19px;letter-spacing:0.099px;font-weight:400;color:#a9a9a9;font-family:'Liberation Sans', sans-serif;">1 files / 0 midi· 12 mar, 16:10</span>
<svg class="b" style="left:607.4px;top:478.7px;" width="22" height="22" viewBox="0 0 24 24" fill="none" stroke="#c4c4c4" stroke-width="3.1" stroke-linecap="round" stroke-linejoin="round"><path d="m6 9 6 6 6-6"/></svg>
<div class="b" style="left:120px;top:536px;width:526px;height:158px;background:#1f2a25;border-radius:12px;border-left:6px solid #65cf9d;"></div>
<span class="t" style="left:151.58px;top:569.00px;font-size:20.49px;letter-spacing:0.000px;font-weight:400;color:#a9a9a9;font-family:'Liberation Sans', sans-serif;">2</span>
<span class="t" style="left:186.49px;top:555.00px;font-size:25.44px;letter-spacing:1.038px;font-weight:400;color:#68d09f;font-family:'Liberation Sans', sans-serif;-webkit-text-stroke:.9px #68d09f;">That’s what you get</span>
<span class="t" style="left:185.55px;top:585.00px;font-size:20.20px;font-weight:400;color:#a9a9a9;font-family:'Liberation Sans', sans-serif;transform-origin:0 0;transform:scaleX(0.9538);">1 files / 1 midi· 19 mar, 15:55</span>
<svg class="b" style="left:607.4px;top:568px;" width="22" height="22" viewBox="0 0 24 24" fill="none" stroke="#c4c4c4" stroke-width="3.1" stroke-linecap="round" stroke-linejoin="round"><path d="m18 15-6-6-6 6"/></svg>
<div class="b" style="left:142px;top:630px;width:54px;height:52px;border:2px solid #383d3b;border-radius:13px;"></div>
<svg class="b" style="left:156.1px;top:645.3000000000001px;" width="23.8" height="23.8" viewBox="0 0 24 24" fill="#b5b5b5" stroke="#b5b5b5" stroke-width="1.6" stroke-linecap="round" stroke-linejoin="round"><polygon points="6 3 20 12 6 21 6 3"/></svg>
<div class="b" style="left:200.6px;top:630px;width:54px;height:52px;border:2px solid #2b322f;border-radius:13px;"></div>
<svg class="b" style="left:215.1px;top:644.1px;" width="25" height="25" viewBox="0 0 24 24" fill="none" stroke="#4b524f" stroke-width="2.2" stroke-linecap="round" stroke-linejoin="round"><path d="M15.2 3a2 2 0 0 1 1.4.6l3.8 3.8a2 2 0 0 1 .6 1.4V19a2 2 0 0 1-2 2H5a2 2 0 0 1-2-2V5a2 2 0 0 1 2-2z"/><path d="M17 21v-7a1 1 0 0 0-1-1H8a1 1 0 0 0-1 1v7"/><path d="M7 3v4a1 1 0 0 0 1 1h7"/></svg>
<div class="b" style="left:359.3px;top:630px;width:54px;height:52px;border:2px solid #383d3b;border-radius:13px;"></div>
<svg class="b" style="left:374.5px;top:643.6px;" width="26" height="26" viewBox="0 0 24 24" fill="none" stroke="#c4c4c4" stroke-width="2.7" stroke-linecap="round" stroke-linejoin="round"><path d="m18 15-6-6-6 6"/></svg>
<div class="b" style="left:417px;top:630px;width:54px;height:52px;border:2px solid #383d3b;border-radius:13px;"></div>
<svg class="b" style="left:432.2px;top:643.6px;" width="26" height="26" viewBox="0 0 24 24" fill="none" stroke="#c4c4c4" stroke-width="2.7" stroke-linecap="round" stroke-linejoin="round"><path d="m6 9 6 6 6-6"/></svg>
<div class="b" style="left:576.2px;top:630px;width:54px;height:52px;border:2px solid #383d3b;border-radius:13px;"></div>
<div class="b" style="left:592.9px;top:654.7px;width:4.4px;height:4.4px;background:#c4c4c4;border-radius:50%;"></div>
<div class="b" style="left:600.8px;top:654.7px;width:4.4px;height:4.4px;background:#c4c4c4;border-radius:50%;"></div>
<div class="b" style="left:608.6999999999999px;top:654.7px;width:4.4px;height:4.4px;background:#c4c4c4;border-radius:50%;"></div>
<div class="b" style="left:120px;top:698px;width:526px;height:86px;background:#111;border-radius:12px;"></div>
<span class="t" style="left:145.86px;top:730.00px;font-size:21.22px;letter-spacing:0.000px;font-weight:400;color:#a9a9a9;font-family:'Liberation Sans', sans-serif;">3</span>
<span class="t" style="left:180.30px;top:718.00px;font-size:24.85px;letter-spacing:0.918px;font-weight:400;color:#f2f2f2;font-family:'Liberation Sans', sans-serif;">Test Track</span>
<span class="t" style="left:180.13px;top:748.00px;font-size:19.19px;letter-spacing:0.413px;font-weight:400;color:#a9a9a9;font-family:'Liberation Sans', sans-serif;">0 files / 0 midi· 9 mar, 11:40</span>
<svg class="b" style="left:607.4px;top:731.3px;" width="22" height="22" viewBox="0 0 24 24" fill="none" stroke="#c4c4c4" stroke-width="3.1" stroke-linecap="round" stroke-linejoin="round"><path d="m6 9 6 6 6-6"/></svg>
<div class="b" style="left:112px;top:1748px;width:542px;height:2px;background:#333;"></div>
<span class="t" style="left:135.90px;top:1778.00px;font-size:21.37px;letter-spacing:1.180px;font-weight:400;color:#a9a9a9;font-family:'Liberation Sans', sans-serif;-webkit-text-stroke:.55px #a9a9a9;">UNUSED SONGS</span>
<div class="b" style="left:565px;top:1774px;width:33px;height:26px;background:#262626;border-radius:13px;"></div>
<span class="t" style="left:575.30px;top:1778.00px;font-size:19.91px;letter-spacing:0.000px;font-weight:400;color:#a9a9a9;font-family:'Liberation Sans', sans-serif;">2</span>
<svg class="b" style="left:609.4px;top:1775.9px;" width="21" height="21" viewBox="0 0 24 24" fill="none" stroke="#a9a9a9" stroke-width="3.2" stroke-linecap="round" stroke-linejoin="round"><path d="m6 9 6 6 6-6"/></svg>
</div></div>
<div class="frame"></div>
</body></html>
